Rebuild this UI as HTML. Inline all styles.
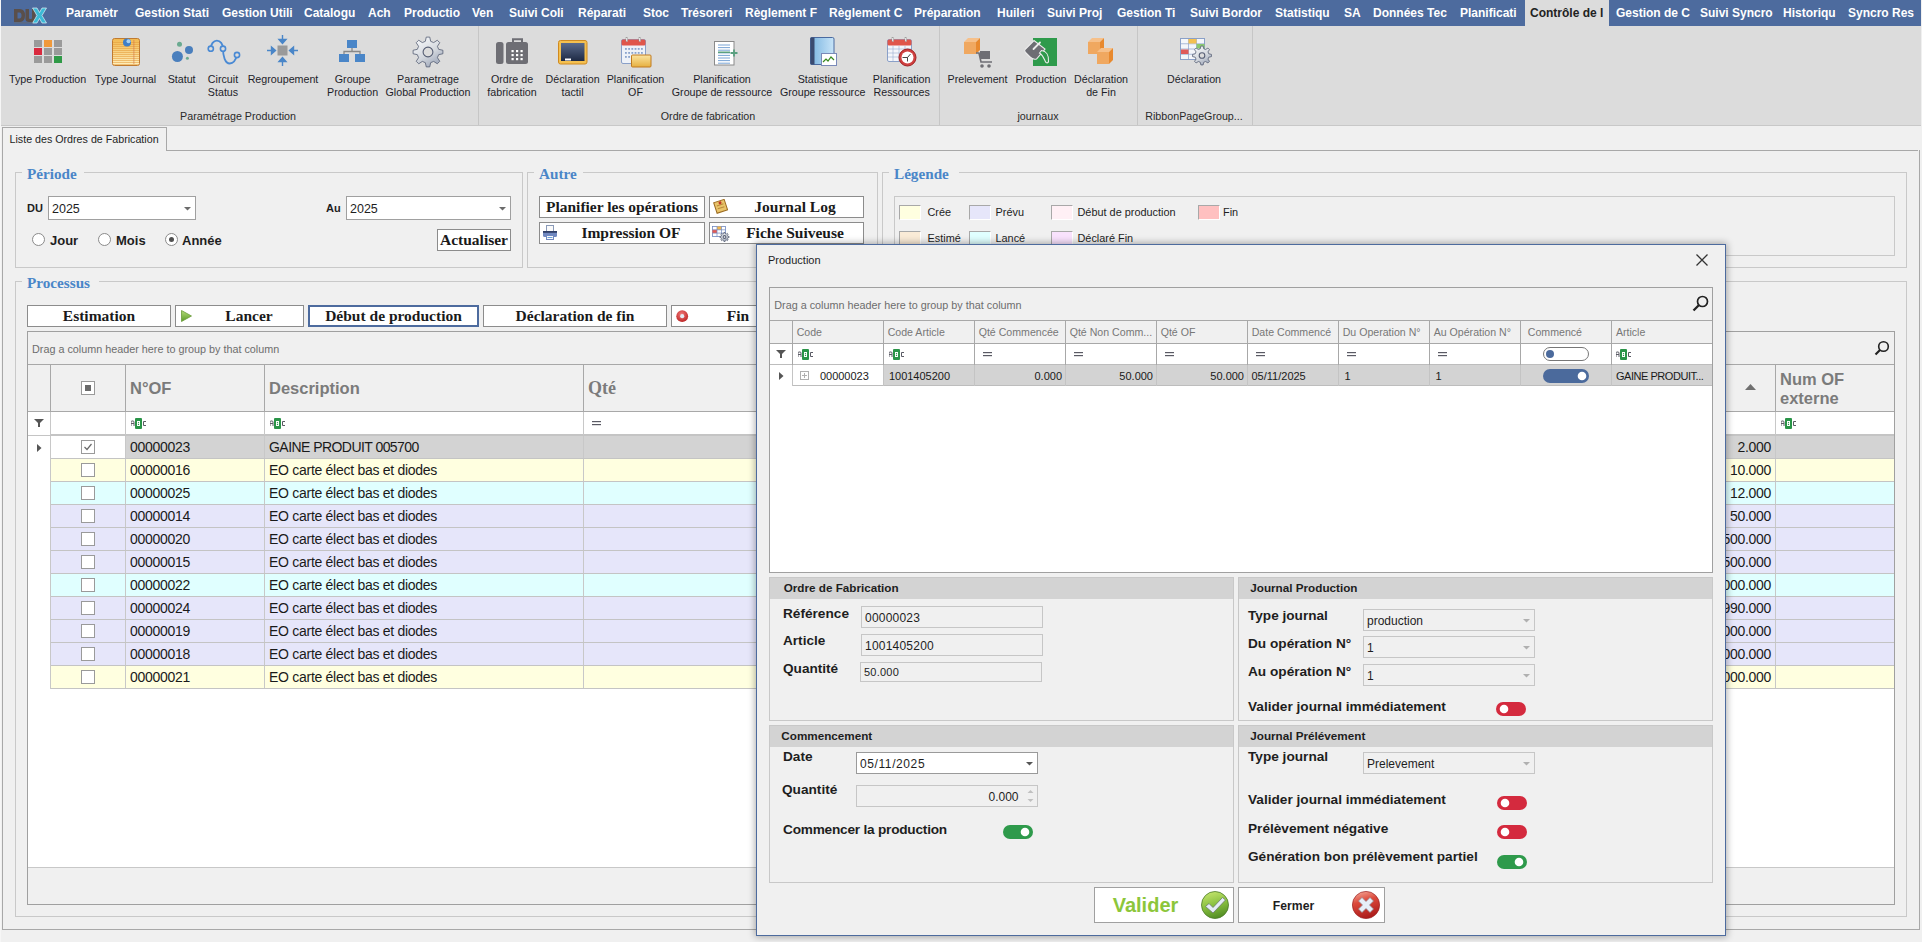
<!DOCTYPE html><html><head><meta charset="utf-8"><style>html,body{margin:0;padding:0;}body{width:1922px;height:942px;overflow:hidden;position:relative;background:#f0f0f0;font-family:"Liberation Sans",sans-serif;}</style></head><body>
<div style="position:absolute;left:0px;top:0px;width:1921px;height:26px;background:#4d6b9e;"></div>
<svg style="position:absolute;left:12px;top:6px;" width="36" height="20" viewBox="0 0 36 20"><path d="M2 3H8Q13 3 13 9.5Q13 16 8 16H2z M5.5 6.5V12.5H7.5Q9.5 12.5 9.5 9.5Q9.5 6.5 7.5 6.5z" fill="#5a4f4a" fill-rule="evenodd"/><path d="M13.5 3H17V12Q17 13 18 13H19Q20 13 20 12V3H23.5V13Q23.5 16 20 16H17Q13.5 16 13.5 13z" fill="#5a4f4a"/><path d="M20.5 2H25L27.5 6.5L30 2H34.5L30 9.5L34.5 17H30L27.5 12.5L25 17H20.5L25 9.5z" fill="#3cbad6" stroke="#ffffff" stroke-width="0.6"/><rect x="2" y="16.5" width="19" height="0.8" fill="#6a6a6a"/></svg>
<div style="position:absolute;left:1525px;top:0px;width:84px;height:26px;background:#dcdcdc;"></div>
<div style="position:absolute;left:66.00px;top:7.44px;font:bold 12px/12px 'Liberation Sans', sans-serif;color:#ffffff;white-space:nowrap;width:56px;">Paramètr</div>
<div style="position:absolute;left:135.00px;top:7.44px;font:bold 12px/12px 'Liberation Sans', sans-serif;color:#ffffff;white-space:nowrap;width:75px;">Gestion Stati</div>
<div style="position:absolute;left:222.00px;top:7.44px;font:bold 12px/12px 'Liberation Sans', sans-serif;color:#ffffff;white-space:nowrap;width:70px;">Gestion Utili</div>
<div style="position:absolute;left:304.00px;top:7.44px;font:bold 12px/12px 'Liberation Sans', sans-serif;color:#ffffff;white-space:nowrap;width:52px;">Catalogu</div>
<div style="position:absolute;left:368.00px;top:7.44px;font:bold 12px/12px 'Liberation Sans', sans-serif;color:#ffffff;white-space:nowrap;width:23px;">Ach</div>
<div style="position:absolute;left:404.00px;top:7.44px;font:bold 12px/12px 'Liberation Sans', sans-serif;color:#ffffff;white-space:nowrap;width:56px;">Productio</div>
<div style="position:absolute;left:472.00px;top:7.44px;font:bold 12px/12px 'Liberation Sans', sans-serif;color:#ffffff;white-space:nowrap;width:23px;">Ven</div>
<div style="position:absolute;left:509.00px;top:7.44px;font:bold 12px/12px 'Liberation Sans', sans-serif;color:#ffffff;white-space:nowrap;width:53px;">Suivi Coli</div>
<div style="position:absolute;left:578.00px;top:7.44px;font:bold 12px/12px 'Liberation Sans', sans-serif;color:#ffffff;white-space:nowrap;width:51px;">Réparati</div>
<div style="position:absolute;left:643.00px;top:7.44px;font:bold 12px/12px 'Liberation Sans', sans-serif;color:#ffffff;white-space:nowrap;width:27px;">Stoc</div>
<div style="position:absolute;left:681.00px;top:7.44px;font:bold 12px/12px 'Liberation Sans', sans-serif;color:#ffffff;white-space:nowrap;width:54px;">Trésoreri</div>
<div style="position:absolute;left:745.00px;top:7.44px;font:bold 12px/12px 'Liberation Sans', sans-serif;color:#ffffff;white-space:nowrap;width:73px;">Règlement F</div>
<div style="position:absolute;left:829.00px;top:7.44px;font:bold 12px/12px 'Liberation Sans', sans-serif;color:#ffffff;white-space:nowrap;width:74px;">Règlement C</div>
<div style="position:absolute;left:914.00px;top:7.44px;font:bold 12px/12px 'Liberation Sans', sans-serif;color:#ffffff;white-space:nowrap;width:69px;">Préparation</div>
<div style="position:absolute;left:997.00px;top:7.44px;font:bold 12px/12px 'Liberation Sans', sans-serif;color:#ffffff;white-space:nowrap;width:38px;">Huileri</div>
<div style="position:absolute;left:1047.00px;top:7.44px;font:bold 12px/12px 'Liberation Sans', sans-serif;color:#ffffff;white-space:nowrap;width:56px;">Suivi Proj</div>
<div style="position:absolute;left:1117.00px;top:7.44px;font:bold 12px/12px 'Liberation Sans', sans-serif;color:#ffffff;white-space:nowrap;width:58px;">Gestion Ti</div>
<div style="position:absolute;left:1190.00px;top:7.44px;font:bold 12px/12px 'Liberation Sans', sans-serif;color:#ffffff;white-space:nowrap;width:71px;">Suivi Bordor</div>
<div style="position:absolute;left:1275.00px;top:7.44px;font:bold 12px/12px 'Liberation Sans', sans-serif;color:#ffffff;white-space:nowrap;width:57px;">Statistiqu</div>
<div style="position:absolute;left:1344.00px;top:7.44px;font:bold 12px/12px 'Liberation Sans', sans-serif;color:#ffffff;white-space:nowrap;width:18px;">SA</div>
<div style="position:absolute;left:1373.00px;top:7.44px;font:bold 12px/12px 'Liberation Sans', sans-serif;color:#ffffff;white-space:nowrap;width:74px;">Données Tec</div>
<div style="position:absolute;left:1460.00px;top:7.44px;font:bold 12px/12px 'Liberation Sans', sans-serif;color:#ffffff;white-space:nowrap;width:57px;">Planificati</div>
<div style="position:absolute;left:1530.00px;top:7.44px;font:bold 12px/12px 'Liberation Sans', sans-serif;color:#222;white-space:nowrap;width:74px;">Contrôle de l</div>
<div style="position:absolute;left:1616.00px;top:7.44px;font:bold 12px/12px 'Liberation Sans', sans-serif;color:#ffffff;white-space:nowrap;width:72px;">Gestion de C</div>
<div style="position:absolute;left:1700.00px;top:7.44px;font:bold 12px/12px 'Liberation Sans', sans-serif;color:#ffffff;white-space:nowrap;width:71px;">Suivi Syncro</div>
<div style="position:absolute;left:1783.00px;top:7.44px;font:bold 12px/12px 'Liberation Sans', sans-serif;color:#ffffff;white-space:nowrap;width:53px;">Historiqu</div>
<div style="position:absolute;left:1848.00px;top:7.44px;font:bold 12px/12px 'Liberation Sans', sans-serif;color:#ffffff;white-space:nowrap;width:65px;">Syncro Res</div>
<div style="position:absolute;left:0px;top:26px;width:1921px;height:99px;background:#dcdcdc;"></div>
<div style="position:absolute;left:0px;top:125px;width:1921px;height:1px;background:#c8c8c8;"></div>
<div style="position:absolute;left:478px;top:26px;width:1px;height:99px;background:#c6c6c6;"></div>
<div style="position:absolute;left:939px;top:26px;width:1px;height:99px;background:#c6c6c6;"></div>
<div style="position:absolute;left:1137px;top:26px;width:1px;height:99px;background:#c6c6c6;"></div>
<div style="position:absolute;left:1252px;top:26px;width:1px;height:99px;background:#c6c6c6;"></div>
<div style="position:absolute;left:0px;top:0px;width:1px;height:942px;background:#f6f6f6;"></div>
<div style="position:absolute;left:-22.40px;top:74.44px;font:normal 10.7px/10.7px 'Liberation Sans', sans-serif;color:#1e1e2a;white-space:nowrap;width:140px;text-align:center;">Type Production</div>
<div style="position:absolute;left:55.60px;top:74.44px;font:normal 10.7px/10.7px 'Liberation Sans', sans-serif;color:#1e1e2a;white-space:nowrap;width:140px;text-align:center;">Type Journal</div>
<div style="position:absolute;left:111.60px;top:74.44px;font:normal 10.7px/10.7px 'Liberation Sans', sans-serif;color:#1e1e2a;white-space:nowrap;width:140px;text-align:center;">Statut</div>
<div style="position:absolute;left:153.00px;top:74.44px;font:normal 10.7px/10.7px 'Liberation Sans', sans-serif;color:#1e1e2a;white-space:nowrap;width:140px;text-align:center;">Circuit</div>
<div style="position:absolute;left:153.00px;top:87.44px;font:normal 10.7px/10.7px 'Liberation Sans', sans-serif;color:#1e1e2a;white-space:nowrap;width:140px;text-align:center;">Status</div>
<div style="position:absolute;left:213.00px;top:74.44px;font:normal 10.7px/10.7px 'Liberation Sans', sans-serif;color:#1e1e2a;white-space:nowrap;width:140px;text-align:center;">Regroupement</div>
<div style="position:absolute;left:282.60px;top:74.44px;font:normal 10.7px/10.7px 'Liberation Sans', sans-serif;color:#1e1e2a;white-space:nowrap;width:140px;text-align:center;">Groupe</div>
<div style="position:absolute;left:282.60px;top:87.44px;font:normal 10.7px/10.7px 'Liberation Sans', sans-serif;color:#1e1e2a;white-space:nowrap;width:140px;text-align:center;">Production</div>
<div style="position:absolute;left:358.00px;top:74.44px;font:normal 10.7px/10.7px 'Liberation Sans', sans-serif;color:#1e1e2a;white-space:nowrap;width:140px;text-align:center;">Parametrage</div>
<div style="position:absolute;left:358.00px;top:87.44px;font:normal 10.7px/10.7px 'Liberation Sans', sans-serif;color:#1e1e2a;white-space:nowrap;width:140px;text-align:center;">Global Production</div>
<div style="position:absolute;left:442.00px;top:74.44px;font:normal 10.7px/10.7px 'Liberation Sans', sans-serif;color:#1e1e2a;white-space:nowrap;width:140px;text-align:center;">Ordre de</div>
<div style="position:absolute;left:442.00px;top:87.44px;font:normal 10.7px/10.7px 'Liberation Sans', sans-serif;color:#1e1e2a;white-space:nowrap;width:140px;text-align:center;">fabrication</div>
<div style="position:absolute;left:502.60px;top:74.44px;font:normal 10.7px/10.7px 'Liberation Sans', sans-serif;color:#1e1e2a;white-space:nowrap;width:140px;text-align:center;">Déclaration</div>
<div style="position:absolute;left:502.60px;top:87.44px;font:normal 10.7px/10.7px 'Liberation Sans', sans-serif;color:#1e1e2a;white-space:nowrap;width:140px;text-align:center;">tactil</div>
<div style="position:absolute;left:565.50px;top:74.44px;font:normal 10.7px/10.7px 'Liberation Sans', sans-serif;color:#1e1e2a;white-space:nowrap;width:140px;text-align:center;">Planification</div>
<div style="position:absolute;left:565.50px;top:87.44px;font:normal 10.7px/10.7px 'Liberation Sans', sans-serif;color:#1e1e2a;white-space:nowrap;width:140px;text-align:center;">OF</div>
<div style="position:absolute;left:652.00px;top:74.44px;font:normal 10.7px/10.7px 'Liberation Sans', sans-serif;color:#1e1e2a;white-space:nowrap;width:140px;text-align:center;">Planification</div>
<div style="position:absolute;left:652.00px;top:87.44px;font:normal 10.7px/10.7px 'Liberation Sans', sans-serif;color:#1e1e2a;white-space:nowrap;width:140px;text-align:center;">Groupe de ressource</div>
<div style="position:absolute;left:752.70px;top:74.44px;font:normal 10.7px/10.7px 'Liberation Sans', sans-serif;color:#1e1e2a;white-space:nowrap;width:140px;text-align:center;">Statistique</div>
<div style="position:absolute;left:752.70px;top:87.44px;font:normal 10.7px/10.7px 'Liberation Sans', sans-serif;color:#1e1e2a;white-space:nowrap;width:140px;text-align:center;">Groupe ressource</div>
<div style="position:absolute;left:831.70px;top:74.44px;font:normal 10.7px/10.7px 'Liberation Sans', sans-serif;color:#1e1e2a;white-space:nowrap;width:140px;text-align:center;">Planification</div>
<div style="position:absolute;left:831.70px;top:87.44px;font:normal 10.7px/10.7px 'Liberation Sans', sans-serif;color:#1e1e2a;white-space:nowrap;width:140px;text-align:center;">Ressources</div>
<div style="position:absolute;left:907.50px;top:74.44px;font:normal 10.7px/10.7px 'Liberation Sans', sans-serif;color:#1e1e2a;white-space:nowrap;width:140px;text-align:center;">Prelevement</div>
<div style="position:absolute;left:971.00px;top:74.44px;font:normal 10.7px/10.7px 'Liberation Sans', sans-serif;color:#1e1e2a;white-space:nowrap;width:140px;text-align:center;">Production</div>
<div style="position:absolute;left:1031.00px;top:74.44px;font:normal 10.7px/10.7px 'Liberation Sans', sans-serif;color:#1e1e2a;white-space:nowrap;width:140px;text-align:center;">Déclaration</div>
<div style="position:absolute;left:1031.00px;top:87.44px;font:normal 10.7px/10.7px 'Liberation Sans', sans-serif;color:#1e1e2a;white-space:nowrap;width:140px;text-align:center;">de Fin</div>
<div style="position:absolute;left:1124.00px;top:74.44px;font:normal 10.7px/10.7px 'Liberation Sans', sans-serif;color:#1e1e2a;white-space:nowrap;width:140px;text-align:center;">Déclaration</div>
<div style="position:absolute;left:138.00px;top:111.44px;font:normal 10.7px/10.7px 'Liberation Sans', sans-serif;color:#2a2a2a;white-space:nowrap;width:200px;text-align:center;">Paramétrage Production</div>
<div style="position:absolute;left:608.00px;top:111.44px;font:normal 10.7px/10.7px 'Liberation Sans', sans-serif;color:#2a2a2a;white-space:nowrap;width:200px;text-align:center;">Ordre de fabrication</div>
<div style="position:absolute;left:938.00px;top:111.44px;font:normal 10.7px/10.7px 'Liberation Sans', sans-serif;color:#2a2a2a;white-space:nowrap;width:200px;text-align:center;">journaux</div>
<div style="position:absolute;left:1094.00px;top:111.44px;font:normal 10.7px/10.7px 'Liberation Sans', sans-serif;color:#2a2a2a;white-space:nowrap;width:200px;text-align:center;">RibbonPageGroup...</div>
<svg style="position:absolute;left:34px;top:40px;" width="30" height="23" viewBox="0 0 30 23"><rect x="0" y="0" width="8" height="7" fill="#9a9a9a"/><rect x="10" y="0" width="8" height="7" fill="#f0993a"/><rect x="20" y="0" width="8" height="7" fill="#9a9a9a"/><rect x="0" y="8" width="8" height="7" fill="#d9293e"/><rect x="10" y="8" width="8" height="7" fill="#9a9a9a"/><rect x="20" y="8" width="8" height="7" fill="#9a9a9a"/><rect x="0" y="16" width="8" height="7" fill="#9a9a9a"/><rect x="10" y="16" width="8" height="7" fill="#9a9a9a"/><rect x="20" y="16" width="8" height="7" fill="#2f9a47"/></svg>
<svg style="position:absolute;left:112px;top:38px;" width="28" height="28" viewBox="0 0 28 28"><defs><linearGradient id="nj" x1="0" y1="0" x2="0" y2="1"><stop offset="0" stop-color="#f2b84e"/><stop offset="1" stop-color="#fff0c0"/></linearGradient></defs><rect x="0.5" y="0.5" width="27" height="27" rx="2" fill="url(#nj)" stroke="#c07a30"/><rect x="1" y="4" width="26" height="1" fill="#e39a38" opacity="0.55"/><rect x="1" y="6" width="26" height="1" fill="#e39a38" opacity="0.55"/><rect x="1" y="8" width="26" height="1" fill="#e39a38" opacity="0.55"/><rect x="1" y="10" width="26" height="1" fill="#e39a38" opacity="0.55"/><rect x="1" y="12" width="26" height="1" fill="#e39a38" opacity="0.55"/><rect x="1" y="14" width="26" height="1" fill="#e39a38" opacity="0.55"/><rect x="1" y="16" width="26" height="1" fill="#e39a38" opacity="0.55"/><rect x="1" y="18" width="26" height="1" fill="#e39a38" opacity="0.55"/><rect x="1" y="20" width="26" height="1" fill="#e39a38" opacity="0.55"/><rect x="1" y="22" width="26" height="1" fill="#e39a38" opacity="0.55"/><rect x="1" y="24" width="26" height="1" fill="#e39a38" opacity="0.55"/><rect x="1" y="26" width="26" height="1" fill="#e39a38" opacity="0.55"/><rect x="21.5" y="2" width="0.8" height="24" fill="#d0704a" opacity="0.7"/><circle cx="15" cy="4.5" r="4" fill="#3f7fc8"/><circle cx="16.5" cy="3.2" r="2" fill="#a8d0f0"/></svg>
<svg style="position:absolute;left:170px;top:40px;" width="26" height="24" viewBox="0 0 26 24"><circle cx="7.4" cy="16.5" r="5.5" fill="#4a7fbd"/><circle cx="19" cy="9.9" r="4" fill="#4a7fbd"/><circle cx="9.5" cy="4.3" r="2.5" fill="#6aaa90"/><circle cx="17.4" cy="18.3" r="1.5" fill="#6aaa90"/></svg>
<svg style="position:absolute;left:206px;top:38px;" width="36" height="30" viewBox="0 0 36 30"><path d="M4.8 10.7C4.8 6 7.5 2.6 10.9 2.6C14.3 2.6 17 6 17 10.7C17 18 19 25.5 23.8 25.5C27.5 25.5 30 21 31 17" fill="none" stroke="#4a8ad4" stroke-width="1.8"/><circle cx="4.8" cy="10.7" r="2.6" fill="#dcdcdc" stroke="#4a8ad4" stroke-width="1.6"/><circle cx="17" cy="10.7" r="2.6" fill="#dcdcdc" stroke="#4a8ad4" stroke-width="1.6"/><circle cx="31" cy="17" r="2.6" fill="#dcdcdc" stroke="#4a8ad4" stroke-width="1.6"/></svg>
<svg style="position:absolute;left:267px;top:35px;" width="32" height="32" viewBox="0 0 32 32"><rect x="10.5" y="10.5" width="10" height="10" fill="#9a9a9a"/><path d="M15.5 0v5M12 4.5l3.5 4 3.5-4z" stroke="#4a86c8" stroke-width="1.4" fill="#4a86c8"/><path d="M15.5 31v-5M12 26.5l3.5-4 3.5 4z" stroke="#4a86c8" stroke-width="1.4" fill="#4a86c8"/><path d="M0 15.5h5M4.5 12l4 3.5-4 3.5z" stroke="#4a86c8" stroke-width="1.4" fill="#4a86c8"/><path d="M31 15.5h-5M26.5 12l-4 3.5 4 3.5z" stroke="#4a86c8" stroke-width="1.4" fill="#4a86c8"/></svg>
<svg style="position:absolute;left:339px;top:40px;" width="27" height="23" viewBox="0 0 27 23"><rect x="8" y="0" width="10" height="8" fill="#4a86c8"/><path d="M13 8v3.5M5 16v-4.5h16V16" fill="none" stroke="#888" stroke-width="1.3"/><rect x="0" y="14" width="10" height="8" fill="#4a86c8"/><rect x="16" y="14" width="10" height="8" fill="#4a86c8"/></svg>
<svg style="position:absolute;left:412px;top:36px;" width="32" height="32" viewBox="0 0 32 32"><defs><linearGradient id="gg160160150" x1="0.2" y1="0" x2="0.8" y2="1"><stop offset="0" stop-color="#f6f8fa"/><stop offset="0.55" stop-color="#d4d8de"/><stop offset="1" stop-color="#98a2b6"/></linearGradient></defs><polygon points="13.35,5.32 14.24,1.10 17.76,1.10 18.65,5.32 21.67,6.58 25.29,4.22 27.78,6.71 25.42,10.33 26.68,13.35 30.90,14.24 30.90,17.76 26.68,18.65 25.42,21.67 27.78,25.29 25.29,27.78 21.67,25.42 18.65,26.68 17.76,30.90 14.24,30.90 13.35,26.68 10.33,25.42 6.71,27.78 4.22,25.29 6.58,21.67 5.32,18.65 1.10,17.76 1.10,14.24 5.32,13.35 6.58,10.33 4.22,6.71 6.71,4.22 10.33,6.58" fill="url(#gg160160150)" stroke="#565e74" stroke-width="0.8" stroke-linejoin="round"/><circle cx="16" cy="16" r="4.9" fill="#dcdcdc" stroke="#565e74" stroke-width="1.1"/></svg>
<svg style="position:absolute;left:496px;top:38px;" width="32" height="27" viewBox="0 0 32 27"><rect x="0" y="4" width="7.5" height="22" rx="2.5" fill="#6e6e74"/><rect x="10" y="4" width="22" height="22" rx="2.5" fill="#6e6e74"/><path d="M17 5V1.2h9V5" fill="none" stroke="#6e6e74" stroke-width="2"/><rect x="15.5" y="12" width="2.2" height="2.2" fill="#fff"/><rect x="20.0" y="12" width="2.2" height="2.2" fill="#fff"/><rect x="24.5" y="12" width="2.2" height="2.2" fill="#fff"/><rect x="15.5" y="16" width="2.2" height="2.2" fill="#fff"/><rect x="20.0" y="16" width="2.2" height="2.2" fill="#fff"/><rect x="24.5" y="16" width="2.2" height="2.2" fill="#fff"/><rect x="15.5" y="20" width="2.2" height="2.2" fill="#fff"/><rect x="20.0" y="20" width="2.2" height="2.2" fill="#fff"/><rect x="24.5" y="20" width="2.2" height="2.2" fill="#fff"/></svg>
<svg style="position:absolute;left:558px;top:40px;" width="30" height="25" viewBox="0 0 30 25"><rect x="0.5" y="0.5" width="28.5" height="23.5" rx="2" fill="#f4c050" stroke="#d08a20"/><defs><linearGradient id="bb" x1="0" y1="0" x2="0" y2="1"><stop offset="0" stop-color="#5a6a8c"/><stop offset="1" stop-color="#1e2a44"/></linearGradient></defs><rect x="3" y="3" width="23.5" height="18" fill="url(#bb)"/><rect x="7" y="18.5" width="6" height="2" fill="#fff"/></svg>
<svg style="position:absolute;left:621px;top:37px;" width="31" height="31" viewBox="0 0 31 31"><rect x="0.5" y="2.5" width="24" height="24" rx="1.5" fill="#eef2f8" stroke="#8aa0c8"/><rect x="0.5" y="2.5" width="24" height="6" rx="1.5" fill="#e0564a"/><rect x="5" y="0" width="1.6" height="4.5" fill="#fff" stroke="#888" stroke-width=".5"/><rect x="18" y="0" width="1.6" height="4.5" fill="#fff" stroke="#888" stroke-width=".5"/><rect x="4.0" y="11" width="1.8" height="1.8" fill="#8aa4cc"/><rect x="7.2" y="11" width="1.8" height="1.8" fill="#8aa4cc"/><rect x="10.4" y="11" width="1.8" height="1.8" fill="#8aa4cc"/><rect x="13.600000000000001" y="11" width="1.8" height="1.8" fill="#8aa4cc"/><rect x="16.8" y="11" width="1.8" height="1.8" fill="#8aa4cc"/><rect x="20.0" y="11" width="1.8" height="1.8" fill="#8aa4cc"/><rect x="4.0" y="15" width="1.8" height="1.8" fill="#8aa4cc"/><rect x="7.2" y="15" width="1.8" height="1.8" fill="#8aa4cc"/><rect x="10.4" y="15" width="1.8" height="1.8" fill="#8aa4cc"/><rect x="13.600000000000001" y="15" width="1.8" height="1.8" fill="#8aa4cc"/><rect x="16.8" y="15" width="1.8" height="1.8" fill="#8aa4cc"/><rect x="20.0" y="15" width="1.8" height="1.8" fill="#8aa4cc"/><rect x="4.0" y="19" width="1.8" height="1.8" fill="#8aa4cc"/><rect x="7.2" y="19" width="1.8" height="1.8" fill="#8aa4cc"/><rect x="10.4" y="19" width="1.8" height="1.8" fill="#8aa4cc"/><rect x="13.600000000000001" y="19" width="1.8" height="1.8" fill="#8aa4cc"/><rect x="16.8" y="19" width="1.8" height="1.8" fill="#8aa4cc"/><rect x="20.0" y="19" width="1.8" height="1.8" fill="#8aa4cc"/><defs><linearGradient id="fo" x1="0" y1="0" x2="0" y2="1"><stop offset="0" stop-color="#fbe4a0"/><stop offset="1" stop-color="#e6b040"/></linearGradient></defs><rect x="10.5" y="18" width="19.5" height="12" rx="1" fill="url(#fo)" stroke="#c07a20"/></svg>
<svg style="position:absolute;left:714px;top:41px;" width="25" height="25" viewBox="0 0 25 25"><rect x="0.5" y="0.5" width="19.5" height="23.5" fill="#fff" stroke="#8a8a8a"/><line x1="4" y1="4.0" x2="16" y2="4.0" stroke="#6a9ad0" stroke-width="0.9"/><line x1="4" y1="6.6" x2="16" y2="6.6" stroke="#6a9ad0" stroke-width="0.9"/><line x1="4" y1="9.2" x2="16" y2="9.2" stroke="#6a9ad0" stroke-width="0.9"/><line x1="4" y1="11.8" x2="16" y2="11.8" stroke="#6a9ad0" stroke-width="0.9"/><line x1="4" y1="14.4" x2="16" y2="14.4" stroke="#6a9ad0" stroke-width="0.9"/><line x1="4" y1="17.0" x2="16" y2="17.0" stroke="#6a9ad0" stroke-width="0.9"/><line x1="4" y1="19.6" x2="16" y2="19.6" stroke="#6a9ad0" stroke-width="0.9"/><line x1="4" y1="22.2" x2="16" y2="22.2" stroke="#6a9ad0" stroke-width="0.9"/><line x1="4" y1="11.3" x2="16" y2="11.3" stroke="#5aa080" stroke-width="1.6"/><path d="M20 8.5v7M16.5 12h7" stroke="#5aa080" stroke-width="1.8"/></svg>
<svg style="position:absolute;left:810px;top:37px;" width="28" height="30" viewBox="0 0 28 30"><defs><linearGradient id="bk" x1="0" y1="0" x2="1" y2="0"><stop offset="0" stop-color="#7ab4e0"/><stop offset="1" stop-color="#c8e4f8"/></linearGradient></defs><rect x="0.5" y="0.5" width="23.5" height="27" rx="1.5" fill="url(#bk)" stroke="#4a6aa0"/><rect x="0.5" y="0.5" width="4" height="27" fill="#3a4a70"/><rect x="11.5" y="16.5" width="15" height="12" fill="#fff" stroke="#7a8ab8"/><path d="M13 25l3-3 2 2 3-4 3 3" fill="none" stroke="#3a8a20" stroke-width="1.2"/></svg>
<svg style="position:absolute;left:887px;top:37px;" width="31" height="30" viewBox="0 0 31 30"><rect x="0.5" y="2.5" width="24" height="22" rx="1.5" fill="#f4f6fa" stroke="#8aa0c8"/><rect x="0.5" y="2.5" width="24" height="6" rx="1.5" fill="#e0564a"/><rect x="5" y="0" width="1.6" height="4.5" fill="#fff" stroke="#888" stroke-width=".5"/><rect x="18" y="0" width="1.6" height="4.5" fill="#fff" stroke="#888" stroke-width=".5"/><line x1="1" y1="12" x2="24" y2="12" stroke="#9ab0d0" stroke-width="0.6"/><line x1="1" y1="16" x2="24" y2="16" stroke="#9ab0d0" stroke-width="0.6"/><line x1="1" y1="20" x2="24" y2="20" stroke="#9ab0d0" stroke-width="0.6"/><line x1="6" y1="9" x2="6" y2="24" stroke="#9ab0d0" stroke-width="0.6"/><line x1="12" y1="9" x2="12" y2="24" stroke="#9ab0d0" stroke-width="0.6"/><line x1="18" y1="9" x2="18" y2="24" stroke="#9ab0d0" stroke-width="0.6"/><circle cx="20.5" cy="20.5" r="8.5" fill="#d04040" stroke="#a02020"/><circle cx="20.5" cy="20.5" r="6" fill="#fff"/><path d="M20.5 20.5l3-3.5M20.5 20.5v4M20.5 20.5h-5" stroke="#333" stroke-width="0.9"/></svg>
<svg style="position:absolute;left:963px;top:38px;" width="33" height="31" viewBox="0 0 33 31"><path d="M1 4l4-4h12l-4 4z" fill="#f6c08a"/><path d="M13 4l4-4v12l-4 4z" fill="#e8892e"/><rect x="1" y="4" width="12" height="12" fill="#f0a860"/><path d="M13 15h3l2 9h11" fill="none" stroke="#6e6e74" stroke-width="1.6"/><rect x="17" y="13" width="10" height="8" fill="#6e6e74"/><circle cx="19" cy="28" r="1.8" fill="#6e6e74"/><circle cx="26" cy="28" r="1.8" fill="#6e6e74"/></svg>
<svg style="position:absolute;left:1024px;top:37px;" width="34" height="30" viewBox="0 0 34 30"><rect x="9" y="1" width="24" height="28" fill="#2e9a4b"/><path d="M1 12.5L10 3.5L21 12L12.5 22Q9 23 6 20L2 16Q0 14 1 12.5z" fill="#6e6e74" stroke="#ececec" stroke-width="1.1"/><path d="M9.5 12L16 5.5" stroke="#ececec" stroke-width="1.8" stroke-linecap="round"/><path d="M17.5 13.5C22 14 25 18 24.5 24.5Q24 26.5 22 25.5C20 22 19 18 15.5 16z" fill="#2e9a4b" stroke="#ececec" stroke-width="1.1"/></svg>
<svg style="position:absolute;left:1087px;top:38px;" width="30" height="30" viewBox="0 0 30 30"><path d="M1 4l4-4h12l-4 4z" fill="#f6c08a"/><path d="M13 4l4-4v12l-4 4z" fill="#e8892e"/><rect x="1" y="4" width="12" height="12" fill="#f0a860"/><path d="M10 14l4-4h12l-4 4z" fill="#f6c08a"/><path d="M22 14l4-4v12l-4 4z" fill="#e8892e"/><rect x="10" y="14" width="12" height="12" fill="#f0a860"/></svg>
<svg style="position:absolute;left:1180px;top:38px;" width="32" height="30" viewBox="0 0 32 30"><rect x="0.5" y="0.5" width="24" height="21" fill="#f4f6fa" stroke="#8aa0c8"/><line x1="0.5" y1="5.75" x2="24.5" y2="5.75" stroke="#8aa0c8" stroke-width="0.7"/><line x1="0.5" y1="11.0" x2="24.5" y2="11.0" stroke="#8aa0c8" stroke-width="0.7"/><line x1="0.5" y1="16.25" x2="24.5" y2="16.25" stroke="#8aa0c8" stroke-width="0.7"/><line x1="8.5" y1="0.5" x2="8.5" y2="21.5" stroke="#8aa0c8" stroke-width="0.7"/><line x1="16.5" y1="0.5" x2="16.5" y2="21.5" stroke="#8aa0c8" stroke-width="0.7"/><rect x="8.5" y="1" width="8" height="4.5" fill="#f4c050"/><rect x="1" y="11.5" width="7.5" height="4.5" fill="#e05a5a"/><rect x="16.5" y="6" width="8" height="4.5" fill="#8ac870"/><defs><linearGradient id="gg22017595" x1="0.2" y1="0" x2="0.8" y2="1"><stop offset="0" stop-color="#f6f8fa"/><stop offset="0.55" stop-color="#d4d8de"/><stop offset="1" stop-color="#98a2b6"/></linearGradient></defs><polygon points="20.31,10.71 20.88,8.07 23.12,8.07 23.69,10.71 25.61,11.50 27.88,10.04 29.46,11.62 28.00,13.89 28.79,15.81 31.43,16.38 31.43,18.62 28.79,19.19 28.00,21.11 29.46,23.38 27.88,24.96 25.61,23.50 23.69,24.29 23.12,26.93 20.88,26.93 20.31,24.29 18.39,23.50 16.12,24.96 14.54,23.38 16.00,21.11 15.21,19.19 12.57,18.62 12.57,16.38 15.21,15.81 16.00,13.89 14.54,11.62 16.12,10.04 18.39,11.50" fill="url(#gg22017595)" stroke="#565e74" stroke-width="0.8" stroke-linejoin="round"/><circle cx="22" cy="17.5" r="2.8" fill="#dcdcdc" stroke="#565e74" stroke-width="1.1"/></svg>
<div style="position:absolute;left:2px;top:150px;width:1916px;height:1px;background:#a8a8a8;"></div>
<div style="position:absolute;left:2px;top:127px;width:165px;height:24px;background:#f0f0f0;border:1px solid #a8a8a8;border-bottom:none;box-sizing:border-box;"></div>
<div style="position:absolute;left:9.50px;top:133.94px;font:normal 10.7px/10.7px 'Liberation Sans', sans-serif;color:#1e1e1e;white-space:nowrap;">Liste des Ordres de Fabrication</div>
<div style="position:absolute;left:2px;top:150px;width:1918px;height:780px;border:1px solid #a8a8a8;border-top:none;box-sizing:border-box;"></div>
<div style="position:absolute;left:15px;top:172px;width:508px;height:96px;border:1px solid #c9c9c9;box-sizing:border-box;"></div>
<div style="position:absolute;left:22px;top:166px;width:62px;height:12px;background:#f0f0f0;"></div>
<div style="position:absolute;left:27.00px;top:165.87px;font:bold 15.2px/15.2px 'Liberation Serif', serif;color:#4a86c8;white-space:nowrap;">Période</div>
<div style="position:absolute;left:527px;top:172px;width:351px;height:96px;border:1px solid #c9c9c9;box-sizing:border-box;"></div>
<div style="position:absolute;left:534px;top:166px;width:49px;height:12px;background:#f0f0f0;"></div>
<div style="position:absolute;left:539.00px;top:165.87px;font:bold 15.2px/15.2px 'Liberation Serif', serif;color:#4a86c8;white-space:nowrap;">Autre</div>
<div style="position:absolute;left:882px;top:172px;width:1025px;height:96px;border:1px solid #c9c9c9;box-sizing:border-box;"></div>
<div style="position:absolute;left:889px;top:166px;width:70px;height:12px;background:#f0f0f0;"></div>
<div style="position:absolute;left:894.00px;top:165.87px;font:bold 15.2px/15.2px 'Liberation Serif', serif;color:#4a86c8;white-space:nowrap;">Légende</div>
<div style="position:absolute;left:15px;top:281px;width:1892px;height:636px;border:1px solid #c9c9c9;box-sizing:border-box;"></div>
<div style="position:absolute;left:22px;top:275px;width:77px;height:12px;background:#f0f0f0;"></div>
<div style="position:absolute;left:27.00px;top:274.87px;font:bold 15.2px/15.2px 'Liberation Serif', serif;color:#4a86c8;white-space:nowrap;">Processus</div>
<div style="position:absolute;left:27.00px;top:202.99px;font:bold 11px/11px 'Liberation Sans', sans-serif;color:#1e1e1e;white-space:nowrap;">DU</div>
<div style="position:absolute;left:48px;top:196px;width:148px;height:24px;background:#ffffff;border:1px solid #a0a0a0;box-sizing:border-box;"></div>
<div style="position:absolute;left:52.00px;top:203.22px;font:normal 12.5px/12.5px 'Liberation Sans', sans-serif;color:#1e1e1e;white-space:nowrap;letter-spacing:0px;">2025</div>
<svg style="position:absolute;left:184px;top:206.5px;" width="8" height="4" viewBox="0 0 8 4"><path d="M0 0h7l-3.5 3.5z" fill="#6b6b6b"/></svg>
<div style="position:absolute;left:326.00px;top:202.99px;font:bold 11px/11px 'Liberation Sans', sans-serif;color:#1e1e1e;white-space:nowrap;">Au</div>
<div style="position:absolute;left:346px;top:196px;width:165px;height:24px;background:#ffffff;border:1px solid #a0a0a0;box-sizing:border-box;"></div>
<div style="position:absolute;left:350.00px;top:203.22px;font:normal 12.5px/12.5px 'Liberation Sans', sans-serif;color:#1e1e1e;white-space:nowrap;letter-spacing:0px;">2025</div>
<svg style="position:absolute;left:499px;top:206.5px;" width="8" height="4" viewBox="0 0 8 4"><path d="M0 0h7l-3.5 3.5z" fill="#6b6b6b"/></svg>
<svg style="position:absolute;left:32px;top:233px;" width="13" height="13" viewBox="0 0 13 13"><circle cx="6.5" cy="6.5" r="6" fill="#fff" stroke="#8a8a8a"/></svg>
<div style="position:absolute;left:50.00px;top:234.00px;font:bold 13px/13px 'Liberation Sans', sans-serif;color:#1e1e1e;white-space:nowrap;">Jour</div>
<svg style="position:absolute;left:98px;top:233px;" width="13" height="13" viewBox="0 0 13 13"><circle cx="6.5" cy="6.5" r="6" fill="#fff" stroke="#8a8a8a"/></svg>
<div style="position:absolute;left:116.00px;top:234.00px;font:bold 13px/13px 'Liberation Sans', sans-serif;color:#1e1e1e;white-space:nowrap;">Mois</div>
<svg style="position:absolute;left:165px;top:233px;" width="13" height="13" viewBox="0 0 13 13"><circle cx="6.5" cy="6.5" r="6" fill="#fff" stroke="#8a8a8a"/><circle cx="6.5" cy="6.5" r="2.5" fill="#505050"/></svg>
<div style="position:absolute;left:182.00px;top:234.00px;font:bold 13px/13px 'Liberation Sans', sans-serif;color:#1e1e1e;white-space:nowrap;">Année</div>
<div style="position:absolute;left:437px;top:229px;width:74px;height:22px;background:#fff;border:1px solid #8c8c8c;box-sizing:border-box;"></div>
<div style="position:absolute;left:417.00px;top:232.42px;font:bold 15.5px/15.5px 'Liberation Serif', serif;color:#1a1a1a;white-space:nowrap;width:114px;text-align:center;">Actualiser</div>
<div style="position:absolute;left:539px;top:196px;width:166px;height:22px;background:#fff;border:1px solid #8c8c8c;box-sizing:border-box;"></div>
<div style="position:absolute;left:519.00px;top:199.42px;font:bold 15.5px/15.5px 'Liberation Serif', serif;color:#1a1a1a;white-space:nowrap;width:206px;text-align:center;">Planifier les opérations</div>
<div style="position:absolute;left:709px;top:196px;width:155px;height:22px;background:#fff;border:1px solid #8c8c8c;box-sizing:border-box;"></div>
<div style="position:absolute;left:697.50px;top:199.42px;font:bold 15.5px/15.5px 'Liberation Serif', serif;color:#1a1a1a;white-space:nowrap;width:195px;text-align:center;">Journal Log</div>
<div style="position:absolute;left:539px;top:222px;width:166px;height:22px;background:#fff;border:1px solid #8c8c8c;box-sizing:border-box;"></div>
<div style="position:absolute;left:528.00px;top:225.42px;font:bold 15.5px/15.5px 'Liberation Serif', serif;color:#1a1a1a;white-space:nowrap;width:206px;text-align:center;">Impression OF</div>
<div style="position:absolute;left:709px;top:222px;width:155px;height:22px;background:#fff;border:1px solid #8c8c8c;box-sizing:border-box;"></div>
<div style="position:absolute;left:697.50px;top:225.42px;font:bold 15.5px/15.5px 'Liberation Serif', serif;color:#1a1a1a;white-space:nowrap;width:195px;text-align:center;">Fiche Suiveuse</div>
<svg style="position:absolute;left:713px;top:199px;" width="15" height="15" viewBox="0 0 15 15"><g transform="rotate(-18 7 7)"><rect x="2" y="2" width="11" height="11" fill="#e9c46a" stroke="#9c6b20"/><line x1="4" y1="6" x2="11" y2="6" stroke="#b98a3a"/><line x1="4" y1="9" x2="11" y2="9" stroke="#b98a3a"/><circle cx="8" cy="4" r="1.5" fill="#c0392b"/></g></svg>
<svg style="position:absolute;left:542px;top:224px;" width="17" height="17" viewBox="0 0 17 17"><rect x="4.5" y="1.5" width="7" height="6" fill="#fafafa" stroke="#8a9ab8"/><rect x="1" y="7" width="14" height="6" rx="1.5" fill="#7088c0"/><rect x="1" y="7" width="14" height="1.8" fill="#2e3e66"/><rect x="4.5" y="11.5" width="7" height="4" fill="#fafafa" stroke="#7088c0"/><rect x="5.5" y="13" width="5" height="1" fill="#6aa0d8"/></svg>
<svg style="position:absolute;left:711px;top:225px;" width="19" height="17" viewBox="0 0 19 17"><rect x="1.5" y="1.5" width="13" height="10" fill="#fff" stroke="#7088c0" stroke-width="0.8"/><rect x="6" y="1.5" width="4.5" height="3.3" fill="#f2b64a"/><rect x="1.5" y="4.8" width="4.5" height="3.3" fill="#e85a50"/><path d="M1.5 4.8h13M1.5 8.1h13M6 1.5v10M10.5 1.5v10" stroke="#7088c0" stroke-width="0.7"/><defs><linearGradient id="gg13512046" x1="0.2" y1="0" x2="0.8" y2="1"><stop offset="0" stop-color="#f6f8fa"/><stop offset="0.55" stop-color="#d4d8de"/><stop offset="1" stop-color="#98a2b6"/></linearGradient></defs><polygon points="12.70,8.80 12.96,7.43 14.04,7.43 14.30,8.80 15.20,9.17 16.35,8.39 17.11,9.15 16.33,10.30 16.70,11.20 18.07,11.46 18.07,12.54 16.70,12.80 16.33,13.70 17.11,14.85 16.35,15.61 15.20,14.83 14.30,15.20 14.04,16.57 12.96,16.57 12.70,15.20 11.80,14.83 10.65,15.61 9.89,14.85 10.67,13.70 10.30,12.80 8.93,12.54 8.93,11.46 10.30,11.20 10.67,10.30 9.89,9.15 10.65,8.39 11.80,9.17" fill="url(#gg13512046)" stroke="#565e74" stroke-width="0.8" stroke-linejoin="round"/><circle cx="13.5" cy="12" r="1.4" fill="#ffffff" stroke="#565e74" stroke-width="1.1"/></svg>
<div style="position:absolute;left:894px;top:196px;width:1001px;height:60px;border:1px solid #c9c9c9;box-sizing:border-box;"></div>
<div style="position:absolute;left:899px;top:205px;width:22px;height:15px;background:#ffffe0;border:1px solid #ffffff;border-top-color:#a8a8a8;border-left-color:#a8a8a8;box-sizing:border-box;"></div>
<div style="position:absolute;left:927.50px;top:206.77px;font:normal 10.9px/10.9px 'Liberation Sans', sans-serif;color:#1e1e1e;white-space:nowrap;">Crée</div>
<div style="position:absolute;left:969px;top:205px;width:22px;height:15px;background:#e6e6fa;border:1px solid #ffffff;border-top-color:#a8a8a8;border-left-color:#a8a8a8;box-sizing:border-box;"></div>
<div style="position:absolute;left:995.50px;top:206.77px;font:normal 10.9px/10.9px 'Liberation Sans', sans-serif;color:#1e1e1e;white-space:nowrap;">Prévu</div>
<div style="position:absolute;left:1051px;top:205px;width:22px;height:15px;background:#fff0f5;border:1px solid #ffffff;border-top-color:#a8a8a8;border-left-color:#a8a8a8;box-sizing:border-box;"></div>
<div style="position:absolute;left:1077.50px;top:206.77px;font:normal 10.9px/10.9px 'Liberation Sans', sans-serif;color:#1e1e1e;white-space:nowrap;">Début de production</div>
<div style="position:absolute;left:1198px;top:205px;width:22px;height:15px;background:#ffc0c0;border:1px solid #ffffff;border-top-color:#a8a8a8;border-left-color:#a8a8a8;box-sizing:border-box;"></div>
<div style="position:absolute;left:1223.00px;top:206.77px;font:normal 10.9px/10.9px 'Liberation Sans', sans-serif;color:#1e1e1e;white-space:nowrap;">Fin</div>
<div style="position:absolute;left:899px;top:231px;width:22px;height:15px;background:#faebd7;border:1px solid #ffffff;border-top-color:#a8a8a8;border-left-color:#a8a8a8;box-sizing:border-box;"></div>
<div style="position:absolute;left:927.50px;top:232.77px;font:normal 10.9px/10.9px 'Liberation Sans', sans-serif;color:#1e1e1e;white-space:nowrap;">Estimé</div>
<div style="position:absolute;left:969px;top:231px;width:22px;height:15px;background:#e0ffff;border:1px solid #ffffff;border-top-color:#a8a8a8;border-left-color:#a8a8a8;box-sizing:border-box;"></div>
<div style="position:absolute;left:995.50px;top:232.77px;font:normal 10.9px/10.9px 'Liberation Sans', sans-serif;color:#1e1e1e;white-space:nowrap;">Lancé</div>
<div style="position:absolute;left:1051px;top:231px;width:22px;height:15px;background:#f9e2fd;border:1px solid #ffffff;border-top-color:#a8a8a8;border-left-color:#a8a8a8;box-sizing:border-box;"></div>
<div style="position:absolute;left:1077.50px;top:232.77px;font:normal 10.9px/10.9px 'Liberation Sans', sans-serif;color:#1e1e1e;white-space:nowrap;">Déclaré Fin</div>
<div style="position:absolute;left:27px;top:305px;width:144px;height:22px;background:#fff;border:1px solid #8c8c8c;box-sizing:border-box;"></div>
<div style="position:absolute;left:7.00px;top:308.42px;font:bold 15.5px/15.5px 'Liberation Serif', serif;color:#1a1a1a;white-space:nowrap;width:184px;text-align:center;">Estimation</div>
<div style="position:absolute;left:175px;top:305px;width:129px;height:22px;background:#fff;border:1px solid #8c8c8c;box-sizing:border-box;"></div>
<div style="position:absolute;left:164.50px;top:308.42px;font:bold 15.5px/15.5px 'Liberation Serif', serif;color:#1a1a1a;white-space:nowrap;width:169px;text-align:center;">Lancer</div>
<svg style="position:absolute;left:180px;top:309px;" width="13" height="14" viewBox="0 0 13 14"><defs><linearGradient id="tl" x1="0" y1="0" x2="0" y2="1"><stop offset="0" stop-color="#b4dc78"/><stop offset="1" stop-color="#5a9a28"/></linearGradient></defs><path d="M1.5 1.5L11.5 7L1.5 12.5z" fill="url(#tl)" stroke="#6a9a3a" stroke-width="0.8" stroke-linejoin="round"/></svg>
<div style="position:absolute;left:308px;top:305px;width:171px;height:22px;background:#fff;border:2px solid #4d6b9e;box-sizing:border-box;"></div>
<div style="position:absolute;left:288.00px;top:308.42px;font:bold 15.5px/15.5px 'Liberation Serif', serif;color:#1a1a1a;white-space:nowrap;width:211px;text-align:center;">Début de production</div>
<div style="position:absolute;left:483px;top:305px;width:184px;height:22px;background:#fff;border:1px solid #8c8c8c;box-sizing:border-box;"></div>
<div style="position:absolute;left:463.00px;top:308.42px;font:bold 15.5px/15.5px 'Liberation Serif', serif;color:#1a1a1a;white-space:nowrap;width:224px;text-align:center;">Déclaration de fin</div>
<div style="position:absolute;left:671px;top:305px;width:180px;height:22px;background:#fff;border:1px solid #8c8c8c;box-sizing:border-box;"></div>
<div style="position:absolute;left:628.00px;top:308.42px;font:bold 15.5px/15.5px 'Liberation Serif', serif;color:#1a1a1a;white-space:nowrap;width:220px;text-align:center;">Fin</div>
<svg style="position:absolute;left:676px;top:310px;" width="13" height="13" viewBox="0 0 13 13"><defs><radialGradient id="rf" cx="45%" cy="35%" r="70%"><stop offset="0" stop-color="#f27a7a"/><stop offset="1" stop-color="#b81e1e"/></radialGradient></defs><circle cx="6.2" cy="6.2" r="5.9" fill="url(#rf)"/><circle cx="6.2" cy="6.2" r="2.1" fill="#e4ecf4"/></svg>
<div style="position:absolute;left:27px;top:331px;width:1868px;height:574px;border:1px solid #a0a0a0;box-sizing:border-box;background:#fff;"></div>
<div style="position:absolute;left:28px;top:332px;width:1866px;height:33px;background:#f0f0f0;"></div>
<div style="position:absolute;left:32.00px;top:343.86px;font:normal 10.8px/10.8px 'Liberation Sans', sans-serif;color:#6d6d6d;white-space:nowrap;">Drag a column header here to group by that column</div>
<svg style="position:absolute;left:1874px;top:340px;" width="16" height="16" viewBox="0 0 16 16"><circle cx="9.5" cy="6.5" r="4.8" fill="none" stroke="#222" stroke-width="1.6"/><line x1="6" y1="10" x2="1.5" y2="14.5" stroke="#222" stroke-width="2.2"/></svg>
<div style="position:absolute;left:28px;top:364px;width:1866px;height:1px;background:#a8a8a8;"></div>
<div style="position:absolute;left:28px;top:365px;width:1866px;height:46px;background:#f0f0f0;"></div>
<div style="position:absolute;left:28px;top:411px;width:1866px;height:1px;background:#a8a8a8;"></div>
<div style="position:absolute;left:28px;top:412px;width:1866px;height:23px;background:#ffffff;"></div>
<div style="position:absolute;left:28px;top:435px;width:1866px;height:1px;background:#c4c4c4;"></div>
<div style="position:absolute;left:51px;top:434px;width:1843px;height:1px;background:#c4c4c4;"></div>
<div style="position:absolute;left:50px;top:365px;width:1px;height:46px;background:#a8a8a8;"></div>
<div style="position:absolute;left:50px;top:412px;width:1px;height:23px;background:#c8c8c8;"></div>
<div style="position:absolute;left:125px;top:365px;width:1px;height:46px;background:#a8a8a8;"></div>
<div style="position:absolute;left:125px;top:412px;width:1px;height:23px;background:#c8c8c8;"></div>
<div style="position:absolute;left:264px;top:365px;width:1px;height:46px;background:#a8a8a8;"></div>
<div style="position:absolute;left:264px;top:412px;width:1px;height:23px;background:#c8c8c8;"></div>
<div style="position:absolute;left:583px;top:365px;width:1px;height:46px;background:#a8a8a8;"></div>
<div style="position:absolute;left:583px;top:412px;width:1px;height:23px;background:#c8c8c8;"></div>
<div style="position:absolute;left:1775px;top:365px;width:1px;height:46px;background:#a8a8a8;"></div>
<div style="position:absolute;left:1775px;top:412px;width:1px;height:23px;background:#c8c8c8;"></div>
<svg style="position:absolute;left:81px;top:381px;" width="14" height="14" viewBox="0 0 14 14"><rect x="0.5" y="0.5" width="13" height="13" fill="#fff" stroke="#9a9a9a"/><rect x="4" y="4" width="6" height="6" fill="#6a6a6a"/></svg>
<div style="position:absolute;left:130.00px;top:380.03px;font:bold 16.5px/16.5px 'Liberation Sans', sans-serif;color:#7b7b7b;white-space:nowrap;">N°OF</div>
<div style="position:absolute;left:269.00px;top:380.03px;font:bold 16.5px/16.5px 'Liberation Sans', sans-serif;color:#7b7b7b;white-space:nowrap;">Description</div>
<div style="position:absolute;left:588.00px;top:378.93px;font:bold 18px/18px 'Liberation Serif', serif;color:#7b7b7b;white-space:nowrap;">Qté</div>
<div style="position:absolute;left:1780.00px;top:371.03px;font:bold 16.5px/16.5px 'Liberation Sans', sans-serif;color:#7b7b7b;white-space:nowrap;">Num OF</div>
<div style="position:absolute;left:1780.00px;top:390.03px;font:bold 16.5px/16.5px 'Liberation Sans', sans-serif;color:#7b7b7b;white-space:nowrap;">externe</div>
<svg style="position:absolute;left:1745px;top:384px;" width="11" height="6" viewBox="0 0 11 6"><path d="M0 6L5.5 0L11 6z" fill="#707070"/></svg>
<svg style="position:absolute;left:34px;top:419px;" width="10" height="9" viewBox="0 0 10 9"><path d="M0 0h10L6 4V8H4V4z" fill="#555"/></svg>
<svg style="position:absolute;left:131px;top:418px;" width="16" height="11" viewBox="0 0 16 11"><path d="M0 8V4Q0 3 1 3H2Q3 3 3 4V8M0 5.5H3" fill="none" stroke="#5a5a64" stroke-width="1"/><rect x="4" y="0" width="7" height="11" rx="1" fill="#2a9448"/><rect x="6" y="3" width="3" height="5" fill="#fff"/><circle cx="7.5" cy="4.6" r=".7" fill="#2a9448"/><circle cx="7.5" cy="6.4" r=".7" fill="#2a9448"/><path d="M15 3.5H12.5V7.5H15" fill="none" stroke="#5a5a64" stroke-width="1"/></svg>
<svg style="position:absolute;left:270px;top:418px;" width="16" height="11" viewBox="0 0 16 11"><path d="M0 8V4Q0 3 1 3H2Q3 3 3 4V8M0 5.5H3" fill="none" stroke="#5a5a64" stroke-width="1"/><rect x="4" y="0" width="7" height="11" rx="1" fill="#2a9448"/><rect x="6" y="3" width="3" height="5" fill="#fff"/><circle cx="7.5" cy="4.6" r=".7" fill="#2a9448"/><circle cx="7.5" cy="6.4" r=".7" fill="#2a9448"/><path d="M15 3.5H12.5V7.5H15" fill="none" stroke="#5a5a64" stroke-width="1"/></svg>
<svg style="position:absolute;left:592px;top:421px;" width="12" height="6" viewBox="0 0 12 6"><rect x="0" y="0" width="9" height="1.2" fill="#5a5a64"/><rect x="0" y="3" width="9" height="1.2" fill="#5a5a64"/></svg>
<svg style="position:absolute;left:1781px;top:418px;" width="16" height="11" viewBox="0 0 16 11"><path d="M0 8V4Q0 3 1 3H2Q3 3 3 4V8M0 5.5H3" fill="none" stroke="#5a5a64" stroke-width="1"/><rect x="4" y="0" width="7" height="11" rx="1" fill="#2a9448"/><rect x="6" y="3" width="3" height="5" fill="#fff"/><circle cx="7.5" cy="4.6" r=".7" fill="#2a9448"/><circle cx="7.5" cy="6.4" r=".7" fill="#2a9448"/><path d="M15 3.5H12.5V7.5H15" fill="none" stroke="#5a5a64" stroke-width="1"/></svg>
<div style="position:absolute;left:51px;top:436px;width:74px;height:22px;background:#fff;"></div>
<div style="position:absolute;left:126px;top:436px;width:1768px;height:22px;background:#d3d3d3;"></div>
<div style="position:absolute;left:51px;top:458px;width:1843px;height:1px;background:#c4c4c4;"></div>
<div style="position:absolute;left:125px;top:436px;width:1px;height:22px;background:#c8c8c8;"></div>
<div style="position:absolute;left:264px;top:436px;width:1px;height:22px;background:#c8c8c8;"></div>
<div style="position:absolute;left:583px;top:436px;width:1px;height:22px;background:#c8c8c8;"></div>
<div style="position:absolute;left:1775px;top:436px;width:1px;height:22px;background:#c8c8c8;"></div>
<svg style="position:absolute;left:81px;top:440px;" width="14" height="14" viewBox="0 0 14 14"><rect x="0.5" y="0.5" width="13" height="13" fill="#fff" stroke="#9a9a9a"/><path d="M3.5 7L6 9.5L10.5 4" fill="none" stroke="#6a6a6a" stroke-width="1.2"/></svg>
<div style="position:absolute;left:130.00px;top:439.95px;font:normal 14px/14px 'Liberation Sans', sans-serif;color:#1a1a1a;white-space:nowrap;letter-spacing:-0.3px;">00000023</div>
<div style="position:absolute;left:269.00px;top:439.95px;font:normal 14px/14px 'Liberation Sans', sans-serif;color:#1a1a1a;white-space:nowrap;letter-spacing:-0.55px;">GAINE PRODUIT 005700</div>
<div style="position:absolute;left:1671.00px;top:439.95px;font:normal 14px/14px 'Liberation Sans', sans-serif;color:#1a1a1a;white-space:nowrap;width:100px;text-align:right;letter-spacing:-0.3px;">2.000</div>
<div style="position:absolute;left:51px;top:459px;width:1843px;height:22px;background:#ffffe0;"></div>
<div style="position:absolute;left:51px;top:481px;width:1843px;height:1px;background:#c4c4c4;"></div>
<div style="position:absolute;left:125px;top:459px;width:1px;height:22px;background:#c8c8c8;"></div>
<div style="position:absolute;left:264px;top:459px;width:1px;height:22px;background:#c8c8c8;"></div>
<div style="position:absolute;left:583px;top:459px;width:1px;height:22px;background:#c8c8c8;"></div>
<div style="position:absolute;left:1775px;top:459px;width:1px;height:22px;background:#c8c8c8;"></div>
<svg style="position:absolute;left:81px;top:463px;" width="14" height="14" viewBox="0 0 14 14"><rect x="0.5" y="0.5" width="13" height="13" fill="#fff" stroke="#9a9a9a"/></svg>
<div style="position:absolute;left:130.00px;top:462.95px;font:normal 14px/14px 'Liberation Sans', sans-serif;color:#1a1a1a;white-space:nowrap;letter-spacing:-0.3px;">00000016</div>
<div style="position:absolute;left:269.00px;top:462.95px;font:normal 14px/14px 'Liberation Sans', sans-serif;color:#1a1a1a;white-space:nowrap;letter-spacing:-0.28px;">EO carte élect bas et diodes</div>
<div style="position:absolute;left:1671.00px;top:462.95px;font:normal 14px/14px 'Liberation Sans', sans-serif;color:#1a1a1a;white-space:nowrap;width:100px;text-align:right;letter-spacing:-0.3px;">10.000</div>
<div style="position:absolute;left:51px;top:482px;width:1843px;height:22px;background:#e0ffff;"></div>
<div style="position:absolute;left:51px;top:504px;width:1843px;height:1px;background:#c4c4c4;"></div>
<div style="position:absolute;left:125px;top:482px;width:1px;height:22px;background:#c8c8c8;"></div>
<div style="position:absolute;left:264px;top:482px;width:1px;height:22px;background:#c8c8c8;"></div>
<div style="position:absolute;left:583px;top:482px;width:1px;height:22px;background:#c8c8c8;"></div>
<div style="position:absolute;left:1775px;top:482px;width:1px;height:22px;background:#c8c8c8;"></div>
<svg style="position:absolute;left:81px;top:486px;" width="14" height="14" viewBox="0 0 14 14"><rect x="0.5" y="0.5" width="13" height="13" fill="#fff" stroke="#9a9a9a"/></svg>
<div style="position:absolute;left:130.00px;top:485.95px;font:normal 14px/14px 'Liberation Sans', sans-serif;color:#1a1a1a;white-space:nowrap;letter-spacing:-0.3px;">00000025</div>
<div style="position:absolute;left:269.00px;top:485.95px;font:normal 14px/14px 'Liberation Sans', sans-serif;color:#1a1a1a;white-space:nowrap;letter-spacing:-0.28px;">EO carte élect bas et diodes</div>
<div style="position:absolute;left:1671.00px;top:485.95px;font:normal 14px/14px 'Liberation Sans', sans-serif;color:#1a1a1a;white-space:nowrap;width:100px;text-align:right;letter-spacing:-0.3px;">12.000</div>
<div style="position:absolute;left:51px;top:505px;width:1843px;height:22px;background:#e6e6fa;"></div>
<div style="position:absolute;left:51px;top:527px;width:1843px;height:1px;background:#c4c4c4;"></div>
<div style="position:absolute;left:125px;top:505px;width:1px;height:22px;background:#c8c8c8;"></div>
<div style="position:absolute;left:264px;top:505px;width:1px;height:22px;background:#c8c8c8;"></div>
<div style="position:absolute;left:583px;top:505px;width:1px;height:22px;background:#c8c8c8;"></div>
<div style="position:absolute;left:1775px;top:505px;width:1px;height:22px;background:#c8c8c8;"></div>
<svg style="position:absolute;left:81px;top:509px;" width="14" height="14" viewBox="0 0 14 14"><rect x="0.5" y="0.5" width="13" height="13" fill="#fff" stroke="#9a9a9a"/></svg>
<div style="position:absolute;left:130.00px;top:508.95px;font:normal 14px/14px 'Liberation Sans', sans-serif;color:#1a1a1a;white-space:nowrap;letter-spacing:-0.3px;">00000014</div>
<div style="position:absolute;left:269.00px;top:508.95px;font:normal 14px/14px 'Liberation Sans', sans-serif;color:#1a1a1a;white-space:nowrap;letter-spacing:-0.28px;">EO carte élect bas et diodes</div>
<div style="position:absolute;left:1671.00px;top:508.95px;font:normal 14px/14px 'Liberation Sans', sans-serif;color:#1a1a1a;white-space:nowrap;width:100px;text-align:right;letter-spacing:-0.3px;">50.000</div>
<div style="position:absolute;left:51px;top:528px;width:1843px;height:22px;background:#e6e6fa;"></div>
<div style="position:absolute;left:51px;top:550px;width:1843px;height:1px;background:#c4c4c4;"></div>
<div style="position:absolute;left:125px;top:528px;width:1px;height:22px;background:#c8c8c8;"></div>
<div style="position:absolute;left:264px;top:528px;width:1px;height:22px;background:#c8c8c8;"></div>
<div style="position:absolute;left:583px;top:528px;width:1px;height:22px;background:#c8c8c8;"></div>
<div style="position:absolute;left:1775px;top:528px;width:1px;height:22px;background:#c8c8c8;"></div>
<svg style="position:absolute;left:81px;top:532px;" width="14" height="14" viewBox="0 0 14 14"><rect x="0.5" y="0.5" width="13" height="13" fill="#fff" stroke="#9a9a9a"/></svg>
<div style="position:absolute;left:130.00px;top:531.95px;font:normal 14px/14px 'Liberation Sans', sans-serif;color:#1a1a1a;white-space:nowrap;letter-spacing:-0.3px;">00000020</div>
<div style="position:absolute;left:269.00px;top:531.95px;font:normal 14px/14px 'Liberation Sans', sans-serif;color:#1a1a1a;white-space:nowrap;letter-spacing:-0.28px;">EO carte élect bas et diodes</div>
<div style="position:absolute;left:1671.00px;top:531.95px;font:normal 14px/14px 'Liberation Sans', sans-serif;color:#1a1a1a;white-space:nowrap;width:100px;text-align:right;letter-spacing:-0.3px;">500.000</div>
<div style="position:absolute;left:51px;top:551px;width:1843px;height:22px;background:#e6e6fa;"></div>
<div style="position:absolute;left:51px;top:573px;width:1843px;height:1px;background:#c4c4c4;"></div>
<div style="position:absolute;left:125px;top:551px;width:1px;height:22px;background:#c8c8c8;"></div>
<div style="position:absolute;left:264px;top:551px;width:1px;height:22px;background:#c8c8c8;"></div>
<div style="position:absolute;left:583px;top:551px;width:1px;height:22px;background:#c8c8c8;"></div>
<div style="position:absolute;left:1775px;top:551px;width:1px;height:22px;background:#c8c8c8;"></div>
<svg style="position:absolute;left:81px;top:555px;" width="14" height="14" viewBox="0 0 14 14"><rect x="0.5" y="0.5" width="13" height="13" fill="#fff" stroke="#9a9a9a"/></svg>
<div style="position:absolute;left:130.00px;top:554.95px;font:normal 14px/14px 'Liberation Sans', sans-serif;color:#1a1a1a;white-space:nowrap;letter-spacing:-0.3px;">00000015</div>
<div style="position:absolute;left:269.00px;top:554.95px;font:normal 14px/14px 'Liberation Sans', sans-serif;color:#1a1a1a;white-space:nowrap;letter-spacing:-0.28px;">EO carte élect bas et diodes</div>
<div style="position:absolute;left:1671.00px;top:554.95px;font:normal 14px/14px 'Liberation Sans', sans-serif;color:#1a1a1a;white-space:nowrap;width:100px;text-align:right;letter-spacing:-0.3px;">500.000</div>
<div style="position:absolute;left:51px;top:574px;width:1843px;height:22px;background:#e0ffff;"></div>
<div style="position:absolute;left:51px;top:596px;width:1843px;height:1px;background:#c4c4c4;"></div>
<div style="position:absolute;left:125px;top:574px;width:1px;height:22px;background:#c8c8c8;"></div>
<div style="position:absolute;left:264px;top:574px;width:1px;height:22px;background:#c8c8c8;"></div>
<div style="position:absolute;left:583px;top:574px;width:1px;height:22px;background:#c8c8c8;"></div>
<div style="position:absolute;left:1775px;top:574px;width:1px;height:22px;background:#c8c8c8;"></div>
<svg style="position:absolute;left:81px;top:578px;" width="14" height="14" viewBox="0 0 14 14"><rect x="0.5" y="0.5" width="13" height="13" fill="#fff" stroke="#9a9a9a"/></svg>
<div style="position:absolute;left:130.00px;top:577.95px;font:normal 14px/14px 'Liberation Sans', sans-serif;color:#1a1a1a;white-space:nowrap;letter-spacing:-0.3px;">00000022</div>
<div style="position:absolute;left:269.00px;top:577.95px;font:normal 14px/14px 'Liberation Sans', sans-serif;color:#1a1a1a;white-space:nowrap;letter-spacing:-0.28px;">EO carte élect bas et diodes</div>
<div style="position:absolute;left:1671.00px;top:577.95px;font:normal 14px/14px 'Liberation Sans', sans-serif;color:#1a1a1a;white-space:nowrap;width:100px;text-align:right;letter-spacing:-0.3px;">000.000</div>
<div style="position:absolute;left:51px;top:597px;width:1843px;height:22px;background:#e6e6fa;"></div>
<div style="position:absolute;left:51px;top:619px;width:1843px;height:1px;background:#c4c4c4;"></div>
<div style="position:absolute;left:125px;top:597px;width:1px;height:22px;background:#c8c8c8;"></div>
<div style="position:absolute;left:264px;top:597px;width:1px;height:22px;background:#c8c8c8;"></div>
<div style="position:absolute;left:583px;top:597px;width:1px;height:22px;background:#c8c8c8;"></div>
<div style="position:absolute;left:1775px;top:597px;width:1px;height:22px;background:#c8c8c8;"></div>
<svg style="position:absolute;left:81px;top:601px;" width="14" height="14" viewBox="0 0 14 14"><rect x="0.5" y="0.5" width="13" height="13" fill="#fff" stroke="#9a9a9a"/></svg>
<div style="position:absolute;left:130.00px;top:600.95px;font:normal 14px/14px 'Liberation Sans', sans-serif;color:#1a1a1a;white-space:nowrap;letter-spacing:-0.3px;">00000024</div>
<div style="position:absolute;left:269.00px;top:600.95px;font:normal 14px/14px 'Liberation Sans', sans-serif;color:#1a1a1a;white-space:nowrap;letter-spacing:-0.28px;">EO carte élect bas et diodes</div>
<div style="position:absolute;left:1671.00px;top:600.95px;font:normal 14px/14px 'Liberation Sans', sans-serif;color:#1a1a1a;white-space:nowrap;width:100px;text-align:right;letter-spacing:-0.3px;">990.000</div>
<div style="position:absolute;left:51px;top:620px;width:1843px;height:22px;background:#e6e6fa;"></div>
<div style="position:absolute;left:51px;top:642px;width:1843px;height:1px;background:#c4c4c4;"></div>
<div style="position:absolute;left:125px;top:620px;width:1px;height:22px;background:#c8c8c8;"></div>
<div style="position:absolute;left:264px;top:620px;width:1px;height:22px;background:#c8c8c8;"></div>
<div style="position:absolute;left:583px;top:620px;width:1px;height:22px;background:#c8c8c8;"></div>
<div style="position:absolute;left:1775px;top:620px;width:1px;height:22px;background:#c8c8c8;"></div>
<svg style="position:absolute;left:81px;top:624px;" width="14" height="14" viewBox="0 0 14 14"><rect x="0.5" y="0.5" width="13" height="13" fill="#fff" stroke="#9a9a9a"/></svg>
<div style="position:absolute;left:130.00px;top:623.95px;font:normal 14px/14px 'Liberation Sans', sans-serif;color:#1a1a1a;white-space:nowrap;letter-spacing:-0.3px;">00000019</div>
<div style="position:absolute;left:269.00px;top:623.95px;font:normal 14px/14px 'Liberation Sans', sans-serif;color:#1a1a1a;white-space:nowrap;letter-spacing:-0.28px;">EO carte élect bas et diodes</div>
<div style="position:absolute;left:1671.00px;top:623.95px;font:normal 14px/14px 'Liberation Sans', sans-serif;color:#1a1a1a;white-space:nowrap;width:100px;text-align:right;letter-spacing:-0.3px;">000.000</div>
<div style="position:absolute;left:51px;top:643px;width:1843px;height:22px;background:#e6e6fa;"></div>
<div style="position:absolute;left:51px;top:665px;width:1843px;height:1px;background:#c4c4c4;"></div>
<div style="position:absolute;left:125px;top:643px;width:1px;height:22px;background:#c8c8c8;"></div>
<div style="position:absolute;left:264px;top:643px;width:1px;height:22px;background:#c8c8c8;"></div>
<div style="position:absolute;left:583px;top:643px;width:1px;height:22px;background:#c8c8c8;"></div>
<div style="position:absolute;left:1775px;top:643px;width:1px;height:22px;background:#c8c8c8;"></div>
<svg style="position:absolute;left:81px;top:647px;" width="14" height="14" viewBox="0 0 14 14"><rect x="0.5" y="0.5" width="13" height="13" fill="#fff" stroke="#9a9a9a"/></svg>
<div style="position:absolute;left:130.00px;top:646.95px;font:normal 14px/14px 'Liberation Sans', sans-serif;color:#1a1a1a;white-space:nowrap;letter-spacing:-0.3px;">00000018</div>
<div style="position:absolute;left:269.00px;top:646.95px;font:normal 14px/14px 'Liberation Sans', sans-serif;color:#1a1a1a;white-space:nowrap;letter-spacing:-0.28px;">EO carte élect bas et diodes</div>
<div style="position:absolute;left:1671.00px;top:646.95px;font:normal 14px/14px 'Liberation Sans', sans-serif;color:#1a1a1a;white-space:nowrap;width:100px;text-align:right;letter-spacing:-0.3px;">000.000</div>
<div style="position:absolute;left:51px;top:666px;width:1843px;height:22px;background:#ffffe0;"></div>
<div style="position:absolute;left:51px;top:688px;width:1843px;height:1px;background:#c4c4c4;"></div>
<div style="position:absolute;left:125px;top:666px;width:1px;height:22px;background:#c8c8c8;"></div>
<div style="position:absolute;left:264px;top:666px;width:1px;height:22px;background:#c8c8c8;"></div>
<div style="position:absolute;left:583px;top:666px;width:1px;height:22px;background:#c8c8c8;"></div>
<div style="position:absolute;left:1775px;top:666px;width:1px;height:22px;background:#c8c8c8;"></div>
<svg style="position:absolute;left:81px;top:670px;" width="14" height="14" viewBox="0 0 14 14"><rect x="0.5" y="0.5" width="13" height="13" fill="#fff" stroke="#9a9a9a"/></svg>
<div style="position:absolute;left:130.00px;top:669.95px;font:normal 14px/14px 'Liberation Sans', sans-serif;color:#1a1a1a;white-space:nowrap;letter-spacing:-0.3px;">00000021</div>
<div style="position:absolute;left:269.00px;top:669.95px;font:normal 14px/14px 'Liberation Sans', sans-serif;color:#1a1a1a;white-space:nowrap;letter-spacing:-0.28px;">EO carte élect bas et diodes</div>
<div style="position:absolute;left:1671.00px;top:669.95px;font:normal 14px/14px 'Liberation Sans', sans-serif;color:#1a1a1a;white-space:nowrap;width:100px;text-align:right;letter-spacing:-0.3px;">000.000</div>
<svg style="position:absolute;left:37px;top:444px;" width="5" height="8" viewBox="0 0 5 8"><path d="M0 0L4.5 4L0 8z" fill="#555"/></svg>
<div style="position:absolute;left:50px;top:436px;width:1px;height:253px;background:#c8c8c8;"></div>
<div style="position:absolute;left:28px;top:867px;width:1866px;height:1px;background:#c8c8c8;"></div>
<div style="position:absolute;left:28px;top:868px;width:1866px;height:36px;background:#f0f0f0;"></div>
<div style="position:absolute;left:756px;top:244px;width:970px;height:692px;background:#f0f0f0;border:1px solid #4d6b9e;box-sizing:border-box;box-shadow:0 0 7px 1px rgba(0,0,0,0.32);"></div>
<div style="position:absolute;left:768.00px;top:254.69px;font:normal 11px/11px 'Liberation Sans', sans-serif;color:#1e1e1e;white-space:nowrap;">Production</div>
<svg style="position:absolute;left:1696px;top:254px;" width="12" height="12" viewBox="0 0 12 12"><path d="M0.5 0.5L11.5 11.5M11.5 0.5L0.5 11.5" stroke="#333" stroke-width="1.3"/></svg>
<div style="position:absolute;left:769px;top:287px;width:944px;height:286px;border:1px solid #a0a0a0;box-sizing:border-box;background:#fff;"></div>
<div style="position:absolute;left:770px;top:288px;width:942px;height:32px;background:#f0f0f0;"></div>
<div style="position:absolute;left:774.30px;top:299.86px;font:normal 10.8px/10.8px 'Liberation Sans', sans-serif;color:#6d6d6d;white-space:nowrap;">Drag a column header here to group by that column</div>
<svg style="position:absolute;left:1692px;top:295px;" width="17" height="17" viewBox="0 0 17 17"><circle cx="10.5" cy="6.5" r="5" fill="none" stroke="#222" stroke-width="1.7"/><line x1="7" y1="10" x2="1.5" y2="15.5" stroke="#222" stroke-width="2.3"/></svg>
<div style="position:absolute;left:770px;top:320px;width:942px;height:1px;background:#a8a8a8;"></div>
<div style="position:absolute;left:770px;top:321px;width:942px;height:22px;background:#f0f0f0;"></div>
<div style="position:absolute;left:770px;top:343px;width:942px;height:1px;background:#a8a8a8;"></div>
<div style="position:absolute;left:770px;top:344px;width:942px;height:20px;background:#fff;"></div>
<div style="position:absolute;left:770px;top:364px;width:942px;height:1px;background:#bdbdbd;"></div>
<div style="position:absolute;left:792px;top:321px;width:1px;height:44px;background:#a8a8a8;"></div>
<div style="position:absolute;left:883px;top:321px;width:1px;height:44px;background:#a8a8a8;"></div>
<div style="position:absolute;left:974px;top:321px;width:1px;height:44px;background:#a8a8a8;"></div>
<div style="position:absolute;left:1065px;top:321px;width:1px;height:44px;background:#a8a8a8;"></div>
<div style="position:absolute;left:1156px;top:321px;width:1px;height:44px;background:#a8a8a8;"></div>
<div style="position:absolute;left:1247px;top:321px;width:1px;height:44px;background:#a8a8a8;"></div>
<div style="position:absolute;left:1338px;top:321px;width:1px;height:44px;background:#a8a8a8;"></div>
<div style="position:absolute;left:1429px;top:321px;width:1px;height:44px;background:#a8a8a8;"></div>
<div style="position:absolute;left:1520px;top:321px;width:1px;height:44px;background:#a8a8a8;"></div>
<div style="position:absolute;left:1611px;top:321px;width:1px;height:44px;background:#a8a8a8;"></div>
<div style="position:absolute;left:796.70px;top:327.33px;font:normal 10.6px/10.6px 'Liberation Sans', sans-serif;color:#777;white-space:nowrap;">Code</div>
<div style="position:absolute;left:887.70px;top:327.33px;font:normal 10.6px/10.6px 'Liberation Sans', sans-serif;color:#777;white-space:nowrap;">Code Article</div>
<div style="position:absolute;left:978.70px;top:327.33px;font:normal 10.6px/10.6px 'Liberation Sans', sans-serif;color:#777;white-space:nowrap;">Qté Commencée</div>
<div style="position:absolute;left:1069.70px;top:327.33px;font:normal 10.6px/10.6px 'Liberation Sans', sans-serif;color:#777;white-space:nowrap;">Qté Non Comm...</div>
<div style="position:absolute;left:1160.70px;top:327.33px;font:normal 10.6px/10.6px 'Liberation Sans', sans-serif;color:#777;white-space:nowrap;">Qté OF</div>
<div style="position:absolute;left:1251.70px;top:327.33px;font:normal 10.6px/10.6px 'Liberation Sans', sans-serif;color:#777;white-space:nowrap;">Date Commencé</div>
<div style="position:absolute;left:1342.70px;top:327.33px;font:normal 10.6px/10.6px 'Liberation Sans', sans-serif;color:#777;white-space:nowrap;">Du Operation N°</div>
<div style="position:absolute;left:1433.70px;top:327.33px;font:normal 10.6px/10.6px 'Liberation Sans', sans-serif;color:#777;white-space:nowrap;">Au Opération N°</div>
<div style="position:absolute;left:1527.80px;top:327.33px;font:normal 10.6px/10.6px 'Liberation Sans', sans-serif;color:#777;white-space:nowrap;">Commencé</div>
<div style="position:absolute;left:1615.90px;top:327.33px;font:normal 10.6px/10.6px 'Liberation Sans', sans-serif;color:#777;white-space:nowrap;">Article</div>
<svg style="position:absolute;left:776px;top:350px;" width="10" height="9" viewBox="0 0 10 9"><path d="M0 0h10L6 4V8H4V4z" fill="#555"/></svg>
<svg style="position:absolute;left:798px;top:349px;" width="16" height="11" viewBox="0 0 16 11"><path d="M0 8V4Q0 3 1 3H2Q3 3 3 4V8M0 5.5H3" fill="none" stroke="#5a5a64" stroke-width="1"/><rect x="4" y="0" width="7" height="11" rx="1" fill="#2a9448"/><rect x="6" y="3" width="3" height="5" fill="#fff"/><circle cx="7.5" cy="4.6" r=".7" fill="#2a9448"/><circle cx="7.5" cy="6.4" r=".7" fill="#2a9448"/><path d="M15 3.5H12.5V7.5H15" fill="none" stroke="#5a5a64" stroke-width="1"/></svg>
<svg style="position:absolute;left:889px;top:349px;" width="16" height="11" viewBox="0 0 16 11"><path d="M0 8V4Q0 3 1 3H2Q3 3 3 4V8M0 5.5H3" fill="none" stroke="#5a5a64" stroke-width="1"/><rect x="4" y="0" width="7" height="11" rx="1" fill="#2a9448"/><rect x="6" y="3" width="3" height="5" fill="#fff"/><circle cx="7.5" cy="4.6" r=".7" fill="#2a9448"/><circle cx="7.5" cy="6.4" r=".7" fill="#2a9448"/><path d="M15 3.5H12.5V7.5H15" fill="none" stroke="#5a5a64" stroke-width="1"/></svg>
<svg style="position:absolute;left:1616px;top:349px;" width="16" height="11" viewBox="0 0 16 11"><path d="M0 8V4Q0 3 1 3H2Q3 3 3 4V8M0 5.5H3" fill="none" stroke="#5a5a64" stroke-width="1"/><rect x="4" y="0" width="7" height="11" rx="1" fill="#2a9448"/><rect x="6" y="3" width="3" height="5" fill="#fff"/><circle cx="7.5" cy="4.6" r=".7" fill="#2a9448"/><circle cx="7.5" cy="6.4" r=".7" fill="#2a9448"/><path d="M15 3.5H12.5V7.5H15" fill="none" stroke="#5a5a64" stroke-width="1"/></svg>
<svg style="position:absolute;left:983px;top:352px;" width="12" height="6" viewBox="0 0 12 6"><rect x="0" y="0" width="9" height="1.2" fill="#5a5a64"/><rect x="0" y="3" width="9" height="1.2" fill="#5a5a64"/></svg>
<svg style="position:absolute;left:1074px;top:352px;" width="12" height="6" viewBox="0 0 12 6"><rect x="0" y="0" width="9" height="1.2" fill="#5a5a64"/><rect x="0" y="3" width="9" height="1.2" fill="#5a5a64"/></svg>
<svg style="position:absolute;left:1165px;top:352px;" width="12" height="6" viewBox="0 0 12 6"><rect x="0" y="0" width="9" height="1.2" fill="#5a5a64"/><rect x="0" y="3" width="9" height="1.2" fill="#5a5a64"/></svg>
<svg style="position:absolute;left:1256px;top:352px;" width="12" height="6" viewBox="0 0 12 6"><rect x="0" y="0" width="9" height="1.2" fill="#5a5a64"/><rect x="0" y="3" width="9" height="1.2" fill="#5a5a64"/></svg>
<svg style="position:absolute;left:1347px;top:352px;" width="12" height="6" viewBox="0 0 12 6"><rect x="0" y="0" width="9" height="1.2" fill="#5a5a64"/><rect x="0" y="3" width="9" height="1.2" fill="#5a5a64"/></svg>
<svg style="position:absolute;left:1438px;top:352px;" width="12" height="6" viewBox="0 0 12 6"><rect x="0" y="0" width="9" height="1.2" fill="#5a5a64"/><rect x="0" y="3" width="9" height="1.2" fill="#5a5a64"/></svg>
<svg style="position:absolute;left:1543px;top:347px;" width="47" height="14" viewBox="0 0 47 14"><rect x="0.5" y="0.5" width="45" height="13" rx="6.5" fill="#fff" stroke="#777"/><circle cx="7" cy="7" r="4" fill="#4b6a9c"/></svg>
<div style="position:absolute;left:770px;top:365px;width:942px;height:21px;background:#fff;"></div>
<div style="position:absolute;left:883px;top:365px;width:829px;height:21px;background:#d3d3d3;"></div>
<div style="position:absolute;left:792px;top:385px;width:920px;height:1px;background:#bdbdbd;"></div>
<div style="position:absolute;left:792px;top:365px;width:1px;height:21px;background:#c4c4c4;"></div>
<div style="position:absolute;left:883px;top:365px;width:1px;height:21px;background:#c4c4c4;"></div>
<div style="position:absolute;left:974px;top:365px;width:1px;height:21px;background:#c4c4c4;"></div>
<div style="position:absolute;left:1065px;top:365px;width:1px;height:21px;background:#c4c4c4;"></div>
<div style="position:absolute;left:1156px;top:365px;width:1px;height:21px;background:#c4c4c4;"></div>
<div style="position:absolute;left:1247px;top:365px;width:1px;height:21px;background:#c4c4c4;"></div>
<div style="position:absolute;left:1338px;top:365px;width:1px;height:21px;background:#c4c4c4;"></div>
<div style="position:absolute;left:1429px;top:365px;width:1px;height:21px;background:#c4c4c4;"></div>
<div style="position:absolute;left:1520px;top:365px;width:1px;height:21px;background:#c4c4c4;"></div>
<div style="position:absolute;left:1611px;top:365px;width:1px;height:21px;background:#c4c4c4;"></div>
<svg style="position:absolute;left:778.5px;top:372px;" width="5" height="8" viewBox="0 0 5 8"><path d="M0 0L4.5 4L0 8z" fill="#555"/></svg>
<svg style="position:absolute;left:800px;top:371px;" width="9" height="9" viewBox="0 0 9 9"><rect x="0.5" y="0.5" width="8" height="8" fill="#fff" stroke="#b0b0b0"/><path d="M4.5 2v5M2 4.5h5" stroke="#b0b0b0"/></svg>
<div style="position:absolute;left:819.90px;top:370.69px;font:normal 11px/11px 'Liberation Sans', sans-serif;color:#1a1a1a;white-space:nowrap;">00000023</div>
<div style="position:absolute;left:888.90px;top:370.69px;font:normal 11px/11px 'Liberation Sans', sans-serif;color:#1a1a1a;white-space:nowrap;">1001405200</div>
<div style="position:absolute;left:982.00px;top:370.69px;font:normal 11px/11px 'Liberation Sans', sans-serif;color:#1a1a1a;white-space:nowrap;width:80px;text-align:right;">0.000</div>
<div style="position:absolute;left:1073.00px;top:370.69px;font:normal 11px/11px 'Liberation Sans', sans-serif;color:#1a1a1a;white-space:nowrap;width:80px;text-align:right;">50.000</div>
<div style="position:absolute;left:1164.00px;top:370.69px;font:normal 11px/11px 'Liberation Sans', sans-serif;color:#1a1a1a;white-space:nowrap;width:80px;text-align:right;">50.000</div>
<div style="position:absolute;left:1251.50px;top:370.69px;font:normal 11px/11px 'Liberation Sans', sans-serif;color:#1a1a1a;white-space:nowrap;">05/11/2025</div>
<div style="position:absolute;left:1344.50px;top:370.69px;font:normal 11px/11px 'Liberation Sans', sans-serif;color:#1a1a1a;white-space:nowrap;">1</div>
<div style="position:absolute;left:1435.50px;top:370.69px;font:normal 11px/11px 'Liberation Sans', sans-serif;color:#1a1a1a;white-space:nowrap;">1</div>
<svg style="position:absolute;left:1543px;top:369px;" width="47" height="14" viewBox="0 0 47 14"><rect x="0" y="0" width="46" height="14" rx="7" fill="#4b6a9c"/><circle cx="39" cy="7" r="4.3" fill="#fff"/></svg>
<div style="position:absolute;left:1615.90px;top:370.69px;font:normal 11px/11px 'Liberation Sans', sans-serif;color:#1a1a1a;white-space:nowrap;letter-spacing:-0.45px;">GAINE PRODUIT...</div>
<div style="position:absolute;left:769px;top:577px;width:465px;height:144px;border:1px solid #c8c8c8;box-sizing:border-box;background:#f0f0f0;"></div>
<div style="position:absolute;left:770px;top:578px;width:463px;height:21px;background:#d3d3d3;"></div>
<div style="position:absolute;left:783.70px;top:582.40px;font:bold 11.7px/11.7px 'Liberation Sans', sans-serif;color:#1e1e1e;white-space:nowrap;">Ordre de Fabrication</div>
<div style="position:absolute;left:783.00px;top:606.95px;font:bold 13.65px/13.65px 'Liberation Sans', sans-serif;color:#1e1e1e;white-space:nowrap;">Référence</div>
<div style="position:absolute;left:783.00px;top:634.49px;font:bold 13.6px/13.6px 'Liberation Sans', sans-serif;color:#1e1e1e;white-space:nowrap;">Article</div>
<div style="position:absolute;left:783.00px;top:662.49px;font:bold 13.6px/13.6px 'Liberation Sans', sans-serif;color:#1e1e1e;white-space:nowrap;">Quantité</div>
<div style="position:absolute;left:861px;top:606px;width:182px;height:22px;background:#f0f0f0;border:1px solid #c6c6c6;box-sizing:border-box;"></div>
<div style="position:absolute;left:865.00px;top:612.34px;font:normal 12px/12px 'Liberation Sans', sans-serif;color:#1e1e1e;white-space:nowrap;letter-spacing:0.22px;">00000023</div>
<div style="position:absolute;left:861px;top:634px;width:182px;height:22px;background:#f0f0f0;border:1px solid #c6c6c6;box-sizing:border-box;"></div>
<div style="position:absolute;left:865.00px;top:640.34px;font:normal 12px/12px 'Liberation Sans', sans-serif;color:#1e1e1e;white-space:nowrap;letter-spacing:0.22px;">1001405200</div>
<div style="position:absolute;left:860px;top:662px;width:182px;height:20px;background:#f0f0f0;border:1px solid #c6c6c6;box-sizing:border-box;"></div>
<div style="position:absolute;left:864.00px;top:666.99px;font:normal 11px/11px 'Liberation Sans', sans-serif;color:#1e1e1e;white-space:nowrap;letter-spacing:0.22px;">50.000</div>
<div style="position:absolute;left:1238px;top:577px;width:475px;height:144px;border:1px solid #c8c8c8;box-sizing:border-box;background:#f0f0f0;"></div>
<div style="position:absolute;left:1239px;top:578px;width:473px;height:21px;background:#d3d3d3;"></div>
<div style="position:absolute;left:1250.30px;top:582.40px;font:bold 11.7px/11.7px 'Liberation Sans', sans-serif;color:#1e1e1e;white-space:nowrap;">Journal Production</div>
<div style="position:absolute;left:1248.00px;top:609.49px;font:bold 13.6px/13.6px 'Liberation Sans', sans-serif;color:#1e1e1e;white-space:nowrap;">Type journal</div>
<div style="position:absolute;left:1248.00px;top:636.95px;font:bold 13.65px/13.65px 'Liberation Sans', sans-serif;color:#1e1e1e;white-space:nowrap;">Du opération N°</div>
<div style="position:absolute;left:1248.00px;top:664.95px;font:bold 13.65px/13.65px 'Liberation Sans', sans-serif;color:#1e1e1e;white-space:nowrap;">Au opération N°</div>
<div style="position:absolute;left:1363px;top:609px;width:172px;height:22px;background:#f0f0f0;border:1px solid #c6c6c6;box-sizing:border-box;"></div>
<div style="position:absolute;left:1367.00px;top:614.64px;font:normal 12px/12px 'Liberation Sans', sans-serif;color:#1e1e1e;white-space:nowrap;letter-spacing:0px;">production</div>
<svg style="position:absolute;left:1523px;top:618.5px;" width="8" height="4" viewBox="0 0 8 4"><path d="M0 0h7l-3.5 3.5z" fill="#b0b0b0"/></svg>
<div style="position:absolute;left:1363px;top:636px;width:172px;height:22px;background:#f0f0f0;border:1px solid #c6c6c6;box-sizing:border-box;"></div>
<div style="position:absolute;left:1367.00px;top:641.64px;font:normal 12px/12px 'Liberation Sans', sans-serif;color:#1e1e1e;white-space:nowrap;letter-spacing:0px;">1</div>
<svg style="position:absolute;left:1523px;top:645.5px;" width="8" height="4" viewBox="0 0 8 4"><path d="M0 0h7l-3.5 3.5z" fill="#b0b0b0"/></svg>
<div style="position:absolute;left:1363px;top:664px;width:172px;height:22px;background:#f0f0f0;border:1px solid #c6c6c6;box-sizing:border-box;"></div>
<div style="position:absolute;left:1367.00px;top:669.64px;font:normal 12px/12px 'Liberation Sans', sans-serif;color:#1e1e1e;white-space:nowrap;letter-spacing:0px;">1</div>
<svg style="position:absolute;left:1523px;top:673.5px;" width="8" height="4" viewBox="0 0 8 4"><path d="M0 0h7l-3.5 3.5z" fill="#b0b0b0"/></svg>
<div style="position:absolute;left:1248.00px;top:699.95px;font:bold 13.65px/13.65px 'Liberation Sans', sans-serif;color:#1e1e1e;white-space:nowrap;">Valider journal immédiatement</div>
<svg style="position:absolute;left:1496px;top:702px;" width="30" height="14" viewBox="0 0 30 14"><rect x="0" y="0" width="30" height="14" rx="7" fill="#d42a3e"/><circle cx="8" cy="7" r="4.3" fill="#fff"/></svg>
<div style="position:absolute;left:769px;top:725px;width:465px;height:158px;border:1px solid #c8c8c8;box-sizing:border-box;background:#f0f0f0;"></div>
<div style="position:absolute;left:770px;top:726px;width:463px;height:21px;background:#d3d3d3;"></div>
<div style="position:absolute;left:781.30px;top:730.40px;font:bold 11.7px/11.7px 'Liberation Sans', sans-serif;color:#1e1e1e;white-space:nowrap;">Commencement</div>
<div style="position:absolute;left:783.00px;top:749.95px;font:bold 13.65px/13.65px 'Liberation Sans', sans-serif;color:#1e1e1e;white-space:nowrap;">Date</div>
<div style="position:absolute;left:782.00px;top:782.95px;font:bold 13.65px/13.65px 'Liberation Sans', sans-serif;color:#1e1e1e;white-space:nowrap;">Quantité</div>
<div style="position:absolute;left:856px;top:752px;width:182px;height:22px;background:#fff;border:1px solid #9a9a9a;box-sizing:border-box;"></div>
<div style="position:absolute;left:860.00px;top:757.64px;font:normal 12px/12px 'Liberation Sans', sans-serif;color:#1e1e1e;white-space:nowrap;letter-spacing:0.6px;">05/11/2025</div>
<svg style="position:absolute;left:1026px;top:761.5px;" width="8" height="4" viewBox="0 0 8 4"><path d="M0 0h7l-3.5 3.5z" fill="#555"/></svg>
<div style="position:absolute;left:856px;top:785px;width:182px;height:22px;background:#f0f0f0;border:1px solid #c6c6c6;box-sizing:border-box;"></div>
<div style="position:absolute;left:938.50px;top:790.84px;font:normal 12px/12px 'Liberation Sans', sans-serif;color:#1e1e1e;white-space:nowrap;width:80px;text-align:right;">0.000</div>
<svg style="position:absolute;left:1026.5px;top:789px;" width="7" height="14" viewBox="0 0 7 14"><path d="M0.5 4L3.5 1L6.5 4z" fill="#c0c0c0"/><path d="M0.5 10L3.5 13L6.5 10z" fill="#c0c0c0"/></svg>
<div style="position:absolute;left:783.00px;top:823.45px;font:bold 13.65px/13.65px 'Liberation Sans', sans-serif;color:#1e1e1e;white-space:nowrap;letter-spacing:-0.22px;">Commencer la production</div>
<svg style="position:absolute;left:1003px;top:824.5px;" width="30" height="14" viewBox="0 0 30 14"><rect x="0" y="0" width="30" height="14" rx="7" fill="#2e9a4b"/><circle cx="22" cy="7" r="4.3" fill="#fff"/></svg>
<div style="position:absolute;left:1238px;top:725px;width:475px;height:158px;border:1px solid #c8c8c8;box-sizing:border-box;background:#f0f0f0;"></div>
<div style="position:absolute;left:1239px;top:726px;width:473px;height:21px;background:#d3d3d3;"></div>
<div style="position:absolute;left:1250.30px;top:730.40px;font:bold 11.7px/11.7px 'Liberation Sans', sans-serif;color:#1e1e1e;white-space:nowrap;">Journal Prélévement</div>
<div style="position:absolute;left:1248.00px;top:749.95px;font:bold 13.65px/13.65px 'Liberation Sans', sans-serif;color:#1e1e1e;white-space:nowrap;">Type journal</div>
<div style="position:absolute;left:1363px;top:752px;width:172px;height:22px;background:#f0f0f0;border:1px solid #c6c6c6;box-sizing:border-box;"></div>
<div style="position:absolute;left:1367.00px;top:757.64px;font:normal 12px/12px 'Liberation Sans', sans-serif;color:#1e1e1e;white-space:nowrap;letter-spacing:0px;">Prelevement</div>
<svg style="position:absolute;left:1523px;top:761.5px;" width="8" height="4" viewBox="0 0 8 4"><path d="M0 0h7l-3.5 3.5z" fill="#b0b0b0"/></svg>
<div style="position:absolute;left:1248.00px;top:792.95px;font:bold 13.65px/13.65px 'Liberation Sans', sans-serif;color:#1e1e1e;white-space:nowrap;">Valider journal immédiatement</div>
<svg style="position:absolute;left:1497px;top:795.5px;" width="30" height="14" viewBox="0 0 30 14"><rect x="0" y="0" width="30" height="14" rx="7" fill="#d42a3e"/><circle cx="8" cy="7" r="4.3" fill="#fff"/></svg>
<div style="position:absolute;left:1248.00px;top:821.95px;font:bold 13.65px/13.65px 'Liberation Sans', sans-serif;color:#1e1e1e;white-space:nowrap;">Prélèvement négative</div>
<svg style="position:absolute;left:1497px;top:824.5px;" width="30" height="14" viewBox="0 0 30 14"><rect x="0" y="0" width="30" height="14" rx="7" fill="#d42a3e"/><circle cx="8" cy="7" r="4.3" fill="#fff"/></svg>
<div style="position:absolute;left:1248.00px;top:849.95px;font:bold 13.65px/13.65px 'Liberation Sans', sans-serif;color:#1e1e1e;white-space:nowrap;">Génération bon prélèvement partiel</div>
<svg style="position:absolute;left:1497px;top:854.5px;" width="30" height="14" viewBox="0 0 30 14"><rect x="0" y="0" width="30" height="14" rx="7" fill="#2e9a4b"/><circle cx="22" cy="7" r="4.3" fill="#fff"/></svg>
<div style="position:absolute;left:1094px;top:887px;width:140px;height:36px;background:#fff;border:1px solid #a0a0a0;box-sizing:border-box;"></div>
<div style="position:absolute;left:1095.50px;top:895.07px;font:bold 20px/20px 'Liberation Sans', sans-serif;color:#8cc63a;white-space:nowrap;width:100px;text-align:center;">Valider</div>
<svg style="position:absolute;left:1200px;top:891px;" width="30" height="30" viewBox="0 0 30 30"><defs><linearGradient id="gv" x1="0.3" y1="0" x2="0.6" y2="1"><stop offset="0" stop-color="#c4e46c"/><stop offset="0.5" stop-color="#88c040"/><stop offset="1" stop-color="#4f8a22"/></linearGradient></defs><circle cx="15" cy="14" r="13.5" fill="url(#gv)" stroke="#4a7a28" stroke-width="0.8"/><path d="M5.5 15.5L9 12.5L13 16.5L22.5 6.5L25.5 9L13 22z" fill="#e4ecf6" stroke="#6a7a6a" stroke-width="0.8" stroke-linejoin="round"/></svg>
<div style="position:absolute;left:1238px;top:887px;width:147px;height:36px;background:#fff;border:1px solid #a0a0a0;box-sizing:border-box;"></div>
<div style="position:absolute;left:1243.50px;top:899.67px;font:bold 12.2px/12.2px 'Liberation Sans', sans-serif;color:#1e1e1e;white-space:nowrap;width:100px;text-align:center;">Fermer</div>
<svg style="position:absolute;left:1351px;top:890px;" width="30" height="30" viewBox="0 0 30 30"><defs><linearGradient id="gr" x1="0.3" y1="0" x2="0.6" y2="1"><stop offset="0" stop-color="#f2a090"/><stop offset="0.35" stop-color="#dc4a3c"/><stop offset="1" stop-color="#a81818"/></linearGradient></defs><circle cx="15" cy="15" r="13.6" fill="url(#gr)" stroke="#9a2020" stroke-width="0.7"/><path d="M15 11.5L19 7.5L22.5 11L18.5 15L22.5 19L19 22.5L15 18.5L11 22.5L7.5 19L11.5 15L7.5 11L11 7.5z" fill="#e6eef8" stroke="#8a8a92" stroke-width="0.7" stroke-linejoin="round"/></svg>
</body></html>
